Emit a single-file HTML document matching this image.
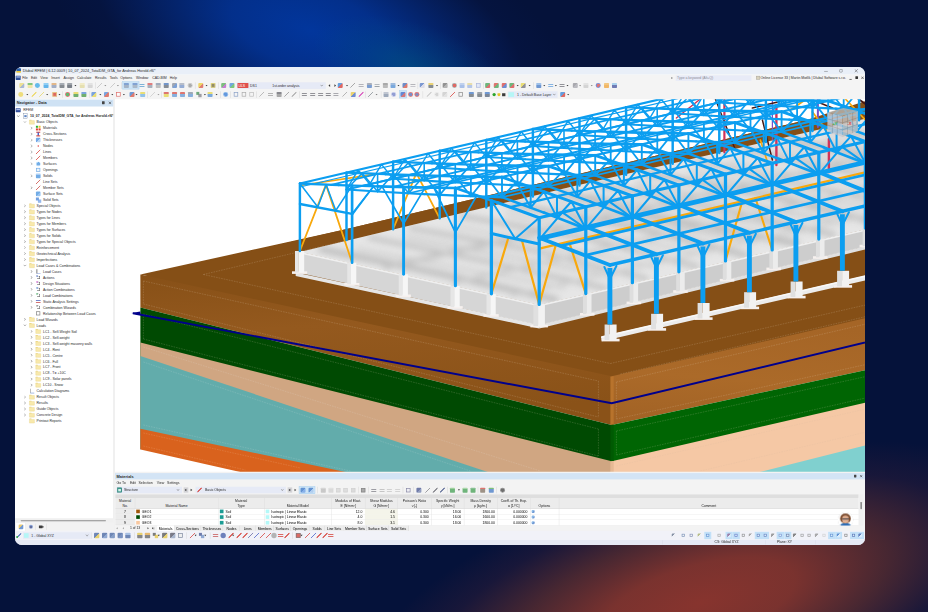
<!DOCTYPE html>
<html><head><meta charset="utf-8"><title>RFEM</title>
<style>
html,body{margin:0;padding:0;}
body{width:928px;height:612px;overflow:hidden;position:relative;background:#05123a;
 font-family:"Liberation Sans",sans-serif;}
#bg{position:absolute;left:0;top:0;width:928px;height:612px;overflow:hidden;background:#05123a;}
#g1{position:absolute;left:40px;top:-100px;width:540px;height:260px;transform:rotate(17deg);
 background:radial-gradient(ellipse closest-side, rgba(2,54,156,1) 0%, rgba(3,50,146,0.92) 30%, rgba(4,40,120,0.6) 60%, rgba(5,25,80,0.25) 82%, rgba(5,18,58,0) 100%);}
#g1b{position:absolute;left:310px;top:22px;width:200px;height:90px;transform:rotate(17deg);
 background:radial-gradient(ellipse closest-side, rgba(0,90,130,0.55) 0%, rgba(0,80,130,0.3) 50%, rgba(5,18,58,0) 100%);}
#g2{position:absolute;left:350px;top:468px;width:700px;height:270px;transform:rotate(-16deg);
 background:radial-gradient(ellipse closest-side, rgba(135,52,46,1) 0%, rgba(128,52,46,0.95) 28%, rgba(100,48,46,0.7) 55%, rgba(60,32,56,0.35) 80%, rgba(5,18,58,0) 100%);}
#win{position:absolute;left:15px;top:67px;width:850px;height:478px;border-radius:7px;overflow:hidden;background:#fff;}
#ui{position:absolute;left:0;top:0;width:2560px;height:1440px;transform:scale(0.332031);transform-origin:0 0;font-size:12px;color:#000;}
#scene{position:absolute;left:0;top:0;}


#ui div,#ui span{box-sizing:border-box;}
.abs{position:absolute;}
.t{position:absolute;white-space:nowrap;line-height:16px;height:16px;font-size:10.6px;letter-spacing:-0.1px;color:#2c2c2c;}
.b{font-weight:bold;font-size:11.8px;letter-spacing:0;}
.ic{position:absolute;width:16px;height:16px;opacity:0.72;}
.sep{position:absolute;width:1px;height:20px;background:#c9c9c9;}
.dd{position:absolute;width:0;height:0;border-left:3px solid transparent;border-right:3px solid transparent;border-top:4px solid #333;}
.hl{position:absolute;background:#cce4f7;border:1px solid #9ac6ea;}
.chev{position:absolute;width:6px;height:6px;border-right:1.3px solid #666;border-bottom:1.3px solid #666;}
.combo{position:absolute;background:#e6eaf6;height:20px;}
.th{position:absolute;text-align:center;white-space:nowrap;line-height:16px;font-size:10.4px;letter-spacing:-0.1px;color:#222;}
.td{position:absolute;white-space:nowrap;line-height:16px;height:16px;font-size:10.4px;letter-spacing:-0.1px;}
.tab{position:absolute;height:18px;line-height:17px;font-size:10.4px;letter-spacing:-0.1px;text-align:center;border-right:1px solid #c8c8c8;white-space:nowrap;}

</style></head><body><div id="bg"><div id="g1"></div><div id="g1b"></div><div id="g2"></div></div><div id="win">
<svg id="scene" style="position:absolute;left:98.60px;top:32.00px" width="751.40" height="372.75" viewBox="113.60 99.00 751.40 372.75">
<rect x="100" y="90" width="800" height="400" fill="#ffffff"/>
<polygon points="140.0,274.5 611.3,376.3 900.0,310.2 900.0,90.0 900.0,97.7 806.0,120.0 574.0,175.0 342.0,230.0" fill="#854f16" />
<defs><linearGradient id="gbl" x1="0" y1="0" x2="0.2" y2="1"><stop offset="0" stop-color="#875017"/><stop offset="0.4" stop-color="#94591e"/><stop offset="1" stop-color="#8a5218"/></linearGradient><linearGradient id="gbr" x1="0" y1="0" x2="-0.2" y2="1"><stop offset="0" stop-color="#a56526"/><stop offset="0.5" stop-color="#ab6a29"/><stop offset="1" stop-color="#a06124"/></linearGradient></defs>
<polygon points="140.0,277.0 611.3,378.8 900.0,312.7 900.0,90.0 806.0,120.0 574.0,175.0 342.0,230.0" fill="#854f16" />
<polygon points="140.0,274.5 611.3,376.3 611.3,425.0 140.0,307.5" fill="url(#gbl)" />
<polygon points="140.0,307.5 611.3,425.0 611.3,600.0 140.0,600.0" fill="#004a02" />
<polygon points="140.0,342.5 611.3,461.3 611.3,600.0 140.0,600.0" fill="#d0a682" />
<polygon points="140.0,356.0 611.3,513.4 611.3,600.0 140.0,600.0" fill="#62acab" />
<polygon points="140.0,428.8 611.3,528.0 611.3,600.0 140.0,600.0" fill="#d9621d" />
<polygon points="139.0,449.2 611.3,556.0 611.3,600.0 139.0,600.0" fill="#ffffff" />
<polygon points="611.3,376.3 900.0,310.2 900.0,362.5 611.3,425.0" fill="url(#gbr)" />
<polygon points="611.3,425.0 900.0,362.5 900.0,600.0 611.3,600.0" fill="#006503" />
<polygon points="611.3,461.3 900.0,394.6 900.0,600.0 611.3,600.0" fill="#f5c8a5" />
<polygon points="611.3,509.2 900.0,436.7 900.0,600.0 611.3,600.0" fill="#80d0cf" />
<polygon points="610.0,376.5 613.3,376.2 613.3,425.0 610.0,425.0" fill="#b8732c" />
<polygon points="610.0,425.0 613.3,424.5 613.3,461.0 610.0,461.3" fill="#005a03" />
<polygon points="610.0,461.3 613.3,461.0 613.3,480.0 610.0,480.0" fill="#e6b994" />
<path d="M203.0 274.5L610.0 363.5" stroke="#e8d8c0" stroke-opacity="0.36" stroke-width="0.5" stroke-dasharray="1.6 1" fill="none"/>
<path d="M610.0 363.5L900.0 297.0" stroke="#e8d8c0" stroke-opacity="0.36" stroke-width="0.5" stroke-dasharray="1.6 1" fill="none"/>
<path d="M203.0 274.5L342.0 241.5" stroke="#e8d8c0" stroke-opacity="0.36" stroke-width="0.5" stroke-dasharray="1.6 1" fill="none"/>
<path d="M143.0 281.0L598.0 381.0" stroke="#e8d8c0" stroke-opacity="0.36" stroke-width="0.5" stroke-dasharray="1.6 1" fill="none"/>
<path d="M143.0 304.0L598.0 417.0" stroke="#e8d8c0" stroke-opacity="0.36" stroke-width="0.5" stroke-dasharray="1.6 1" fill="none"/>
<path d="M143.0 281.0L143.0 304.0" stroke="#e8d8c0" stroke-opacity="0.36" stroke-width="0.5" stroke-dasharray="1.6 1" fill="none"/>
<path d="M598.0 381.0L598.0 417.0" stroke="#e8d8c0" stroke-opacity="0.36" stroke-width="0.5" stroke-dasharray="1.6 1" fill="none"/>
<path d="M143.0 314.0L598.0 429.0" stroke="#e8d8c0" stroke-opacity="0.36" stroke-width="0.5" stroke-dasharray="1.6 1" fill="none"/>
<path d="M143.0 339.0L598.0 456.0" stroke="#e8d8c0" stroke-opacity="0.36" stroke-width="0.5" stroke-dasharray="1.6 1" fill="none"/>
<path d="M143.0 314.0L143.0 339.0" stroke="#e8d8c0" stroke-opacity="0.36" stroke-width="0.5" stroke-dasharray="1.6 1" fill="none"/>
<path d="M598.0 429.0L598.0 456.0" stroke="#e8d8c0" stroke-opacity="0.36" stroke-width="0.5" stroke-dasharray="1.6 1" fill="none"/>
<path d="M143.0 347.0L540.0 471.0" stroke="#eeeeee" stroke-opacity="0.30" stroke-width="0.5" stroke-dasharray="1.6 1" fill="none"/>
<path d="M143.0 362.0L470.0 471.0" stroke="#eeeeee" stroke-opacity="0.30" stroke-width="0.5" stroke-dasharray="1.6 1" fill="none"/>
<path d="M143.0 425.0L350.0 471.0" stroke="#eeeeee" stroke-opacity="0.30" stroke-width="0.5" stroke-dasharray="1.6 1" fill="none"/>
<path d="M143.0 433.0L300.0 468.0" stroke="#ffe0c0" stroke-opacity="0.30" stroke-width="0.5" stroke-dasharray="1.6 1" fill="none"/>
<path d="M143.0 446.0L245.0 470.0" stroke="#ffe0c0" stroke-opacity="0.30" stroke-width="0.5" stroke-dasharray="1.6 1" fill="none"/>
<path d="M616.0 382.0L900.0 316.0" stroke="#e8d8c0" stroke-opacity="0.36" stroke-width="0.5" stroke-dasharray="1.6 1" fill="none"/>
<path d="M616.0 419.0L900.0 357.0" stroke="#e8d8c0" stroke-opacity="0.36" stroke-width="0.5" stroke-dasharray="1.6 1" fill="none"/>
<path d="M616.0 382.0L616.0 419.0" stroke="#e8d8c0" stroke-opacity="0.36" stroke-width="0.5" stroke-dasharray="1.6 1" fill="none"/>
<path d="M616.0 431.0L900.0 369.0" stroke="#e8d8c0" stroke-opacity="0.36" stroke-width="0.5" stroke-dasharray="1.6 1" fill="none"/>
<path d="M616.0 455.0L900.0 390.0" stroke="#e8d8c0" stroke-opacity="0.36" stroke-width="0.5" stroke-dasharray="1.6 1" fill="none"/>
<path d="M616.0 431.0L616.0 455.0" stroke="#e8d8c0" stroke-opacity="0.36" stroke-width="0.5" stroke-dasharray="1.6 1" fill="none"/>
<path d="M616.0 466.0L900.0 401.0" stroke="#d8b8a0" stroke-opacity="0.40" stroke-width="0.5" stroke-dasharray="1.6 1" fill="none"/>
<path d="M700.0 471.0L900.0 424.0" stroke="#d8b8a0" stroke-opacity="0.40" stroke-width="0.5" stroke-dasharray="1.6 1" fill="none"/>
<path d="M620.0 374.0L900.0 308.5" stroke="#e8d8c0" stroke-opacity="0.36" stroke-width="0.5" stroke-dasharray="1.6 1" fill="none"/>
<path d="M132.5 313.2L611.3 403.3L900 334" stroke="#00008c" stroke-width="1.9" fill="none"/>
<polygon points="131,313 140,311.6 140,315.2" fill="#00008c"/>
<defs><filter id="blur3" x="-10%" y="-10%" width="120%" height="120%"><feGaussianBlur stdDeviation="3"/></filter><clipPath id="slabclip"><polygon points="299.3,252.0 538.8,305.0 900.0,221.4 900.0,110.5 806.0,132.5 574.0,186.0"/></clipPath></defs>
<polygon points="299.3,252.0 538.8,305.0 900.0,221.4 900.0,110.5 806.0,132.5 574.0,186.0" fill="#e6e6e6" />
<g clip-path="url(#slabclip)"><g filter="url(#blur3)" opacity="0.8"><path d="M318.6 248.7L437.5 273.4L557.7 300.1" stroke="#b2b2b2" stroke-width="6.0" fill="none"/><path d="M355.8 248.8L564.1 287.6" stroke="#c2c2c2" stroke-width="2.6" fill="none"/><path d="M367.6 237.3L487.1 261.8L606.7 288.6" stroke="#b2b2b2" stroke-width="4.2" fill="none"/><path d="M405.4 237.2L613.1 276.2" stroke="#c2c2c2" stroke-width="3.5" fill="none"/><path d="M408.6 227.7L534.7 250.7L647.7 279.0" stroke="#b2b2b2" stroke-width="4.2" fill="none"/><path d="M453.0 226.0L654.1 266.6" stroke="#c2c2c2" stroke-width="2.7" fill="none"/><path d="M459.6 215.8L586.8 238.5L698.7 267.1" stroke="#b2b2b2" stroke-width="4.4" fill="none"/><path d="M505.1 213.9L705.0 254.7" stroke="#c2c2c2" stroke-width="2.9" fill="none"/><path d="M508.4 204.3L635.1 227.2L747.5 255.7" stroke="#b2b2b2" stroke-width="5.7" fill="none"/><path d="M553.4 202.6L753.9 243.2" stroke="#c2c2c2" stroke-width="3.3" fill="none"/><path d="M558.9 192.5L669.1 219.3L798.0 243.8" stroke="#b2b2b2" stroke-width="6.6" fill="none"/><path d="M587.4 194.6L804.4 231.4" stroke="#c2c2c2" stroke-width="3.1" fill="none"/><path d="M596.2 183.8L716.7 208.1L835.3 235.1" stroke="#b2b2b2" stroke-width="4.9" fill="none"/><path d="M635.0 183.5L841.7 222.7" stroke="#c2c2c2" stroke-width="4.1" fill="none"/><path d="M643.2 172.8L769.8 195.7L882.3 224.1" stroke="#b2b2b2" stroke-width="5.9" fill="none"/><path d="M688.0 171.1L888.7 211.7" stroke="#c2c2c2" stroke-width="3.2" fill="none"/><path d="M693.9 160.9L809.1 186.5L933.1 212.3" stroke="#b2b2b2" stroke-width="4.2" fill="none"/><path d="M727.4 161.9L939.4 199.8" stroke="#c2c2c2" stroke-width="2.9" fill="none"/><path d="M742.0 149.7L860.8 174.4L981.1 201.0" stroke="#b2b2b2" stroke-width="4.9" fill="none"/><path d="M779.1 149.8L987.5 188.6" stroke="#c2c2c2" stroke-width="3.7" fill="none"/><path d="M786.1 139.4L905.6 164.0L1025.2 190.7" stroke="#b2b2b2" stroke-width="6.4" fill="none"/><path d="M823.9 139.3L1031.6 178.3" stroke="#c2c2c2" stroke-width="3.9" fill="none"/><path d="M830.3 129.0L956.1 152.2L1069.5 180.4" stroke="#b2b2b2" stroke-width="5.6" fill="none"/><path d="M874.3 127.5L1075.8 167.9" stroke="#c2c2c2" stroke-width="4.3" fill="none"/><path d="M882.4 116.9L998.7 142.2L1121.5 168.2" stroke="#b2b2b2" stroke-width="6.9" fill="none"/><path d="M916.9 117.5L1127.9 155.8" stroke="#c2c2c2" stroke-width="2.7" fill="none"/><path d="M383.1 267.6L993.8 129.1" stroke="#bcbcbc" stroke-width="5" fill="none"/><path d="M452.5 283.1L1063.2 144.6" stroke="#c4c4c4" stroke-width="4" fill="none"/><path d="M509.9 295.9L1120.6 157.4" stroke="#c8c8c8" stroke-width="3" fill="none"/></g></g>
<polygon points="299.3,252.0 538.8,305.0 538.8,325.3 299.3,273.0" fill="#d6d6d6" />
<polygon points="538.8,305.0 900.0,221.4 900.0,238.2 538.8,325.3" fill="#cdcdcd" />
<polygon points="295.3,272.5 538.8,324.8 538.8,328.6 295.3,276.0" fill="#e6e6e6" />
<polygon points="538.8,324.8 900.0,237.7 900.0,241.0 538.8,328.6" fill="#e0e0e0" />
<path d="M299.3 252.6L538.8 305.6L900.0 222.0" stroke="#efefef" stroke-width="1.8" fill="none"/>
<rect x="291.6" y="271.3" width="15.2" height="2.6" fill="#f6f0ee"/><rect x="294.6" y="251.0" width="3.9" height="21.5" fill="#e6e6e6"/><rect x="298.5" y="251.0" width="5.3" height="21.5" fill="#f6f6f6"/>
<rect x="343.8" y="283.0" width="15.2" height="2.6" fill="#f6f0ee"/><rect x="346.8" y="262.7" width="3.9" height="21.5" fill="#e6e6e6"/><rect x="350.6" y="262.7" width="5.3" height="21.5" fill="#f6f6f6"/>
<rect x="395.3" y="294.5" width="15.2" height="2.6" fill="#f6f0ee"/><rect x="398.3" y="274.2" width="3.9" height="21.5" fill="#e6e6e6"/><rect x="402.2" y="274.2" width="5.3" height="21.5" fill="#f6f6f6"/>
<rect x="447.1" y="306.1" width="15.2" height="2.6" fill="#f6f0ee"/><rect x="450.1" y="285.8" width="3.9" height="21.5" fill="#e6e6e6"/><rect x="454.0" y="285.8" width="5.3" height="21.5" fill="#f6f6f6"/>
<rect x="483.1" y="314.1" width="15.2" height="2.6" fill="#f6f0ee"/><rect x="486.1" y="293.8" width="3.9" height="21.5" fill="#e6e6e6"/><rect x="490.0" y="293.8" width="5.3" height="21.5" fill="#f6f6f6"/>
<rect x="530.0" y="324.8" width="17.5" height="2.6" fill="#f6f0ee"/><rect x="533.0" y="304.5" width="4.8" height="21.5" fill="#e0e0e0"/><rect x="537.8" y="304.5" width="6.7" height="21.5" fill="#f2f2f2"/>
<rect x="579.6" y="313.0" width="14.5" height="2.6" fill="#f6f0ee"/><rect x="582.6" y="293.6" width="3.6" height="20.6" fill="#dedede"/><rect x="586.2" y="293.6" width="4.9" height="20.6" fill="#ececec"/>
<rect x="626.2" y="301.6" width="14.5" height="2.6" fill="#f6f0ee"/><rect x="629.2" y="282.7" width="3.6" height="20.1" fill="#dedede"/><rect x="632.8" y="282.7" width="4.9" height="20.1" fill="#ececec"/>
<rect x="672.8" y="290.2" width="14.5" height="2.6" fill="#f6f0ee"/><rect x="675.8" y="271.8" width="3.6" height="19.6" fill="#dedede"/><rect x="679.4" y="271.8" width="4.9" height="19.6" fill="#ececec"/>
<rect x="719.4" y="278.9" width="14.5" height="2.6" fill="#f6f0ee"/><rect x="722.4" y="260.9" width="3.6" height="19.2" fill="#dedede"/><rect x="726.0" y="260.9" width="4.9" height="19.2" fill="#ececec"/>
<rect x="766.0" y="267.6" width="14.5" height="2.6" fill="#f6f0ee"/><rect x="769.0" y="250.0" width="3.6" height="18.8" fill="#dedede"/><rect x="772.6" y="250.0" width="4.9" height="18.8" fill="#ececec"/>
<rect x="812.6" y="256.2" width="14.5" height="2.6" fill="#f6f0ee"/><rect x="815.6" y="239.1" width="3.6" height="18.3" fill="#dedede"/><rect x="819.2" y="239.1" width="4.9" height="18.3" fill="#ececec"/>
<rect x="859.2" y="244.8" width="14.5" height="2.6" fill="#f6f0ee"/><rect x="862.2" y="228.2" width="3.6" height="17.9" fill="#dedede"/><rect x="865.8" y="228.2" width="4.9" height="17.9" fill="#ececec"/>
<path d="M601.0 339.0L900.0 269.9" stroke="#ececec" stroke-width="4.6" fill="none"/>
<path d="M601.0 337.1L900.0 268.0" stroke="#f8f8f8" stroke-width="1.6" fill="none"/>
<rect x="601.2" y="338.8" width="18.0" height="2.6" fill="#f6f0ee"/><rect x="604.2" y="324.5" width="5.0" height="15.5" fill="#e0e0e0"/><rect x="609.2" y="324.5" width="7.0" height="15.5" fill="#f2f2f2"/>
<rect x="647.7" y="328.1" width="18.0" height="2.6" fill="#f6f0ee"/><rect x="650.7" y="313.8" width="5.0" height="15.5" fill="#e0e0e0"/><rect x="655.7" y="313.8" width="7.0" height="15.5" fill="#f2f2f2"/>
<rect x="694.2" y="317.3" width="18.0" height="2.6" fill="#f6f0ee"/><rect x="697.2" y="303.0" width="5.0" height="15.5" fill="#e0e0e0"/><rect x="702.2" y="303.0" width="7.0" height="15.5" fill="#f2f2f2"/>
<rect x="740.7" y="306.6" width="18.0" height="2.6" fill="#f6f0ee"/><rect x="743.7" y="292.2" width="5.0" height="15.5" fill="#e0e0e0"/><rect x="748.7" y="292.2" width="7.0" height="15.5" fill="#f2f2f2"/>
<rect x="787.2" y="295.8" width="18.0" height="2.6" fill="#f6f0ee"/><rect x="790.2" y="281.5" width="5.0" height="15.5" fill="#e0e0e0"/><rect x="795.2" y="281.5" width="7.0" height="15.5" fill="#f2f2f2"/>
<rect x="833.7" y="285.1" width="18.0" height="2.6" fill="#f6f0ee"/><rect x="836.7" y="270.8" width="5.0" height="15.5" fill="#e0e0e0"/><rect x="841.7" y="270.8" width="7.0" height="15.5" fill="#f2f2f2"/>
<rect x="880.2" y="274.3" width="18.0" height="2.6" fill="#f6f0ee"/><rect x="883.2" y="260.0" width="5.0" height="15.5" fill="#e0e0e0"/><rect x="888.2" y="260.0" width="7.0" height="15.5" fill="#f2f2f2"/>
<path d="M724.0 100.0L724.0 152.5" stroke="#d0345a" stroke-width="2.20" fill="none" stroke-linecap="round"/>
<path d="M776.0 105.0L776.0 165.0M828.5 139.0L828.5 172.0" stroke="#d0345a" stroke-width="2.40" fill="none" stroke-linecap="round"/>
<path d="M772.0 99.0L772.0 140.0" stroke="#7a4cc8" stroke-width="1.20" fill="none" stroke-linecap="round"/>
<path d="M817.5 99.0L817.5 127.0" stroke="#7a4cc8" stroke-width="2.00" fill="none" stroke-linecap="round"/>
<path d="M700.0 99.0L676.0 118.0" stroke="#d0345a" stroke-width="1.40" fill="none" stroke-linecap="round"/>
<path d="M715.0 99.0L735.0 150.0" stroke="#4a1a14" stroke-width="1.40" fill="none" stroke-linecap="round"/>
<path d="M752.0 108.0L790.0 99.0M810.0 99.0L832.0 108.0" stroke="#4a1a14" stroke-width="1.60" fill="none" stroke-linecap="round"/>
<path d="M762.0 120.0L772.0 160.0" stroke="#4a1a14" stroke-width="1.50" fill="none" stroke-linecap="round"/>
<path d="M858.0 99.0L865.0 104.0" stroke="#4a1a14" stroke-width="1.80" fill="none" stroke-linecap="round"/>
<path d="M790.0 110.0L806.0 99.0M812.0 112.0L826.0 130.0M845.0 99.0L865.0 120.0" stroke="#f8a80c" stroke-width="1.80" fill="none" stroke-linecap="round"/>
<path d="M760.0 140.0L768.0 165.0" stroke="#f8a80c" stroke-width="1.70" fill="none" stroke-linecap="round"/>
<path d="M392.7 229.2L416.0 173.2M416.0 173.2L439.3 218.3M299.5 251.0L325.6 184.6M325.6 184.6L351.7 262.7" stroke="#f8a80c" stroke-width="1.80" fill="none" stroke-linecap="round"/>
<path d="M299.5 185.5L377.2 173.9" stroke="#f8a80c" stroke-width="1.60" fill="none" stroke-linecap="round"/>
<path d="M538.8 248.6L1144.6 106.9M491.0 293.8L508.1 237.3M521.5 240.3L538.8 304.5M538.8 304.5L555.5 244.7M568.6 241.6L585.4 293.6" stroke="#f8a80c" stroke-width="2.20" fill="none" stroke-linecap="round"/>
<path d="M725.1 260.9L741.9 201.1M755.0 198.0L771.8 250.0" stroke="#f8a80c" stroke-width="2.10" fill="none" stroke-linecap="round"/>
<path d="M299.5 251.0L299.5 183.5M346.1 240.1L346.1 172.6M392.7 229.2L392.7 161.7M439.3 218.3L439.3 150.8M485.9 207.4L485.9 139.9M532.5 196.5L532.5 129.0M579.1 185.6L579.1 118.1M625.7 174.7L625.7 107.2M672.3 163.8L672.3 96.3M718.9 152.9L718.9 85.4M765.5 142.0L765.5 74.5M812.1 131.1L812.1 63.6M858.7 120.2L858.7 52.7M905.3 109.3L905.3 41.8" stroke="#0c9ef0" stroke-width="2.45" fill="none" stroke-linecap="round"/>
<path d="M299.5 183.5L905.3 41.8" stroke="#0c9ef0" stroke-width="2.20" fill="none" stroke-linecap="round"/>
<path d="M299.5 187.0L905.3 45.3" stroke="#0c9ef0" stroke-width="1.20" fill="none" stroke-linecap="round"/>
<path d="M346.1 189.6L905.3 58.8" stroke="#0c9ef0" stroke-width="1.90" fill="none" stroke-linecap="round"/>
<path d="M346.1 189.6L357.8 169.9M357.8 169.9L369.4 184.2M369.4 184.2L381.1 164.4M381.1 164.4L392.7 178.7M392.7 178.7L404.4 159.0M404.4 159.0L416.0 173.2M416.0 173.2L427.6 153.5M427.6 153.5L439.3 167.8M439.3 167.8L451.0 148.1M451.0 148.1L462.6 162.3M462.6 162.3L474.2 142.6M474.2 142.6L485.9 156.9M485.9 156.9L497.6 137.2M497.6 137.2L509.2 151.4M509.2 151.4L520.9 131.7M520.9 131.7L532.5 146.0M532.5 146.0L544.1 126.3M544.1 126.3L555.8 140.6M555.8 140.6L567.5 120.8M567.5 120.8L579.1 135.1M579.1 135.1L590.8 115.4M590.8 115.4L602.4 129.6M602.4 129.6L614.0 109.9M614.0 109.9L625.7 124.2M625.7 124.2L637.4 104.5M637.4 104.5L649.0 118.8M649.0 118.8L660.7 99.0M660.7 99.0L672.3 113.3M672.3 113.3L684.0 93.6M684.0 93.6L695.6 107.8M695.6 107.8L707.2 88.1M707.2 88.1L718.9 102.4M718.9 102.4L730.5 82.7M730.5 82.7L742.2 96.9M742.2 96.9L753.9 77.2M753.9 77.2L765.5 91.5M765.5 91.5L777.2 71.8M777.2 71.8L788.8 86.1M788.8 86.1L800.5 66.3M800.5 66.3L812.1 80.6M812.1 80.6L823.8 60.9M823.8 60.9L835.4 75.1M835.4 75.1L847.1 55.4M847.1 55.4L858.7 69.7M858.7 69.7L870.4 50.0M870.4 50.0L882.0 64.2M882.0 64.2L893.6 44.5M893.6 44.5L905.3 58.8" stroke="#0c9ef0" stroke-width="1.45" fill="none" stroke-linecap="round"/>
<path d="M905.3 41.8L944.2 43.4M858.7 52.7L897.6 54.3M812.1 63.6L851.0 65.2M765.5 74.5L804.4 76.1M718.9 85.4L757.8 87.0M672.3 96.3L711.2 97.9M625.7 107.2L664.6 108.8M579.1 118.1L618.0 119.7M532.5 129.0L571.4 130.6M485.9 139.9L524.8 141.5M439.3 150.8L478.2 152.4M392.7 161.7L431.6 163.3M346.1 172.6L385.0 174.2M299.5 183.5L338.4 185.1" stroke="#0c9ef0" stroke-width="2.28" fill="none" stroke-linecap="round"/>
<path d="M944.2 43.4L983.1 44.7M897.6 54.3L936.5 55.6M851.0 65.2L889.9 66.5M804.4 76.1L843.3 77.4M757.8 87.0L796.7 88.3M711.2 97.9L750.1 99.2M664.6 108.8L703.5 110.1M618.0 119.7L656.9 121.0M571.4 130.6L610.3 131.9M524.8 141.5L563.7 142.8M478.2 152.4L517.1 153.7M431.6 163.3L470.5 164.6M385.0 174.2L423.9 175.5M338.4 185.1L377.3 186.4" stroke="#0c9ef0" stroke-width="2.43" fill="none" stroke-linecap="round"/>
<path d="M983.1 44.7L1021.9 45.7M936.5 55.6L975.3 56.6M889.9 66.5L928.7 67.5M843.3 77.4L882.1 78.4M796.7 88.3L835.5 89.3M750.1 99.2L788.9 100.2M703.5 110.1L742.3 111.1M656.9 121.0L695.7 122.0M610.3 131.9L649.1 132.9M563.7 142.8L602.5 143.8M517.1 153.7L555.9 154.7M470.5 164.6L509.3 165.6M423.9 175.5L462.7 176.5M377.3 186.4L416.1 187.4" stroke="#0c9ef0" stroke-width="2.58" fill="none" stroke-linecap="round"/>
<path d="M1021.9 45.7L1060.8 46.3M975.3 56.6L1014.2 57.2M928.7 67.5L967.6 68.1M882.1 78.4L921.0 79.0M835.5 89.3L874.4 89.9M788.9 100.2L827.8 100.8M742.3 111.1L781.2 111.7M695.7 122.0L734.6 122.6M649.1 132.9L688.0 133.5M602.5 143.8L641.4 144.4M555.9 154.7L594.8 155.3M509.3 165.6L548.2 166.2M462.7 176.5L501.6 177.1M416.1 187.4L455.0 188.0" stroke="#0c9ef0" stroke-width="2.73" fill="none" stroke-linecap="round"/>
<path d="M1060.8 46.3L1102.7 60.8M1014.2 57.2L1056.1 71.7M967.6 68.1L1009.5 82.6M921.0 79.0L962.9 93.5M874.4 89.9L916.3 104.4M827.8 100.8L869.7 115.3M781.2 111.7L823.1 126.2M734.6 122.6L776.5 137.1M688.0 133.5L729.9 148.0M641.4 144.4L683.3 158.9M594.8 155.3L636.7 169.8M548.2 166.2L590.1 180.7M501.6 177.1L543.5 191.6M455.0 188.0L496.9 202.5" stroke="#0c9ef0" stroke-width="2.88" fill="none" stroke-linecap="round"/>
<path d="M1102.7 60.8L1144.6 76.1M1056.1 71.7L1098.0 87.0M1009.5 82.6L1051.3 97.9M962.9 93.5L1004.8 108.8M916.3 104.4L958.2 119.7M869.7 115.3L911.5 130.6M823.1 126.2L865.0 141.5M776.5 137.1L818.4 152.4M729.9 148.0L771.8 163.3M683.3 158.9L725.1 174.2M636.7 169.8L678.5 185.1M590.1 180.7L632.0 196.0M543.5 191.6L585.4 206.9M496.9 202.5L538.8 217.8" stroke="#0c9ef0" stroke-width="3.04" fill="none" stroke-linecap="round"/>
<path d="M905.3 58.8L944.2 61.2M858.7 69.7L897.6 72.1M812.1 80.6L851.0 83.0M765.5 91.5L804.4 93.9M718.9 102.4L757.8 104.8M672.3 113.3L711.2 115.7M625.7 124.2L664.6 126.6M579.1 135.1L618.0 137.5M532.5 146.0L571.4 148.4M485.9 156.9L524.8 159.3M439.3 167.8L478.2 170.2M392.7 178.7L431.6 181.1M346.1 189.6L385.0 192.0M491.0 200.4L514.8 238.8M514.8 238.8L538.8 217.8" stroke="#0c9ef0" stroke-width="1.96" fill="none" stroke-linecap="round"/>
<path d="M944.2 61.2L983.1 63.3M897.6 72.1L936.5 74.2M851.0 83.0L889.9 85.1M804.4 93.9L843.3 96.0M757.8 104.8L796.7 106.9M711.2 115.7L750.1 117.8M664.6 126.6L703.5 128.7M618.0 137.5L656.9 139.6M571.4 148.4L610.3 150.5M524.8 159.3L563.7 161.4M478.2 170.2L517.1 172.3M431.6 181.1L470.5 183.2M385.0 192.0L423.9 194.1" stroke="#0c9ef0" stroke-width="2.09" fill="none" stroke-linecap="round"/>
<path d="M983.1 63.3L1021.9 65.1M936.5 74.2L975.3 76.0M889.9 85.1L928.7 86.9M843.3 96.0L882.1 97.8M796.7 106.9L835.5 108.7M750.1 117.8L788.9 119.6M703.5 128.7L742.3 130.5M656.9 139.6L695.7 141.4M610.3 150.5L649.1 152.3M563.7 161.4L602.5 163.2M517.1 172.3L555.9 174.1M470.5 183.2L509.3 185.0M423.9 194.1L462.7 195.9" stroke="#0c9ef0" stroke-width="2.22" fill="none" stroke-linecap="round"/>
<path d="M1021.9 65.1L1060.8 66.4M975.3 76.0L1014.2 77.3M928.7 86.9L967.6 88.2M882.1 97.8L921.0 99.1M835.5 108.7L874.4 110.0M788.9 119.6L827.8 120.9M742.3 130.5L781.2 131.8M695.7 141.4L734.6 142.7M649.1 152.3L688.0 153.6M602.5 163.2L641.4 164.5M555.9 174.1L594.8 175.4M509.3 185.0L548.2 186.3M462.7 195.9L501.6 197.2" stroke="#0c9ef0" stroke-width="2.35" fill="none" stroke-linecap="round"/>
<path d="M1060.8 66.4L1102.7 81.8M1014.2 77.3L1056.1 92.7M967.6 88.2L1009.5 103.6M921.0 99.1L962.9 114.5M874.4 110.0L916.3 125.4M827.8 120.9L869.7 136.3M781.2 131.8L823.1 147.2M734.6 142.7L776.5 158.1M688.0 153.6L729.9 169.0M641.4 164.5L683.3 179.9M594.8 175.4L636.7 190.8M548.2 186.3L590.1 201.7M501.6 197.2L543.5 212.6" stroke="#0c9ef0" stroke-width="2.49" fill="none" stroke-linecap="round"/>
<path d="M1102.7 81.8L1144.6 97.9M1056.1 92.7L1098.0 108.8M1009.5 103.6L1051.3 119.7M962.9 114.5L1004.8 130.6M916.3 125.4L958.2 141.5M869.7 136.3L911.5 152.4M823.1 147.2L865.0 163.3M776.5 158.1L818.4 174.2M729.9 169.0L771.8 185.1M683.3 179.9L725.1 196.0M636.7 190.8L678.5 206.9M590.1 201.7L632.0 217.8M543.5 212.6L585.4 228.7" stroke="#0c9ef0" stroke-width="2.63" fill="none" stroke-linecap="round"/>
<path d="M905.3 58.8L920.9 42.5M920.9 42.5L936.4 60.8M858.7 69.7L874.3 53.4M874.3 53.4L889.8 71.7M812.1 80.6L827.7 64.3M827.7 64.3L843.2 82.6M765.5 91.5L781.1 75.2M781.1 75.2L796.6 93.5M718.9 102.4L734.5 86.1M734.5 86.1L750.0 104.4M672.3 113.3L687.9 97.0M687.9 97.0L703.4 115.3M625.7 124.2L641.3 107.9M641.3 107.9L656.8 126.2M579.1 135.1L594.7 118.8M594.7 118.8L610.2 137.1M532.5 146.0L548.1 129.7M548.1 129.7L563.6 148.0M485.9 156.9L501.5 140.6M501.5 140.6L517.0 158.9M439.3 167.8L454.9 151.5M454.9 151.5L470.4 169.8M392.7 178.7L408.3 162.4M408.3 162.4L423.8 180.7M346.1 189.6L361.7 173.3M361.7 173.3L377.2 191.6" stroke="#0c9ef0" stroke-width="1.49" fill="none" stroke-linecap="round"/>
<path d="M936.4 60.8L952.0 43.7M952.0 43.7L967.5 62.5M936.4 60.8L936.4 43.1M889.8 71.7L905.4 54.6M905.4 54.6L920.9 73.4M889.8 71.7L889.8 54.0M843.2 82.6L858.8 65.5M858.8 65.5L874.3 84.3M843.2 82.6L843.2 64.9M796.6 93.5L812.2 76.4M812.2 76.4L827.7 95.2M796.6 93.5L796.6 75.8M750.0 104.4L765.6 87.3M765.6 87.3L781.1 106.1M750.0 104.4L750.0 86.7M703.4 115.3L719.0 98.2M719.0 98.2L734.5 117.0M703.4 115.3L703.4 97.6M656.8 126.2L672.4 109.1M672.4 109.1L687.9 127.9M656.8 126.2L656.8 108.5M610.2 137.1L625.8 120.0M625.8 120.0L641.3 138.8M610.2 137.1L610.2 119.4M563.6 148.0L579.2 130.9M579.2 130.9L594.7 149.7M563.6 148.0L563.6 130.3M517.0 158.9L532.6 141.8M532.6 141.8L548.1 160.6M517.0 158.9L517.0 141.2M470.4 169.8L486.0 152.7M486.0 152.7L501.5 171.5M470.4 169.8L470.4 152.1M423.8 180.7L439.4 163.6M439.4 163.6L454.9 182.4M423.8 180.7L423.8 163.0M377.2 191.6L392.8 174.5M392.8 174.5L408.3 193.3M377.2 191.6L377.2 173.9" stroke="#0c9ef0" stroke-width="1.57" fill="none" stroke-linecap="round"/>
<path d="M967.5 62.5L983.1 44.7M983.1 44.7L998.6 64.1M967.5 62.5L967.5 44.3M920.9 73.4L936.5 55.6M936.5 55.6L952.0 75.0M920.9 73.4L920.9 55.2M874.3 84.3L889.9 66.5M889.9 66.5L905.4 85.9M874.3 84.3L874.3 66.1M827.7 95.2L843.3 77.4M843.3 77.4L858.8 96.8M827.7 95.2L827.7 77.0M781.1 106.1L796.7 88.3M796.7 88.3L812.2 107.7M781.1 106.1L781.1 87.9M734.5 117.0L750.1 99.2M750.1 99.2L765.6 118.6M734.5 117.0L734.5 98.8M687.9 127.9L703.5 110.1M703.5 110.1L719.0 129.5M687.9 127.9L687.9 109.7M641.3 138.8L656.9 121.0M656.9 121.0L672.4 140.4M641.3 138.8L641.3 120.6M594.7 149.7L610.3 131.9M610.3 131.9L625.8 151.3M594.7 149.7L594.7 131.5M548.1 160.6L563.7 142.8M563.7 142.8L579.2 162.2M548.1 160.6L548.1 142.4M501.5 171.5L517.1 153.7M517.1 153.7L532.6 173.1M501.5 171.5L501.5 153.3M454.9 182.4L470.5 164.6M470.5 164.6L486.0 184.0M454.9 182.4L454.9 164.2M408.3 193.3L423.9 175.5M423.9 175.5L439.4 194.9M408.3 193.3L408.3 175.1" stroke="#0c9ef0" stroke-width="1.65" fill="none" stroke-linecap="round"/>
<path d="M998.6 64.1L1014.2 45.5M1014.2 45.5L1029.7 65.4M998.6 64.1L998.6 45.2M952.0 75.0L967.6 56.4M967.6 56.4L983.1 76.3M952.0 75.0L952.0 56.1M905.4 85.9L921.0 67.3M921.0 67.3L936.5 87.2M905.4 85.9L905.4 67.0M858.8 96.8L874.4 78.2M874.4 78.2L889.9 98.1M858.8 96.8L858.8 77.9M812.2 107.7L827.8 89.1M827.8 89.1L843.3 109.0M812.2 107.7L812.2 88.8M765.6 118.6L781.2 100.0M781.2 100.0L796.7 119.9M765.6 118.6L765.6 99.7M719.0 129.5L734.6 110.9M734.6 110.9L750.1 130.8M719.0 129.5L719.0 110.6M672.4 140.4L688.0 121.8M688.0 121.8L703.5 141.7M672.4 140.4L672.4 121.5M625.8 151.3L641.4 132.7M641.4 132.7L656.9 152.6M625.8 151.3L625.8 132.4M579.2 162.2L594.8 143.6M594.8 143.6L610.3 163.5M579.2 162.2L579.2 143.3M532.6 173.1L548.2 154.5M548.2 154.5L563.7 174.4M532.6 173.1L532.6 154.2M486.0 184.0L501.6 165.4M501.6 165.4L517.1 185.3M486.0 184.0L486.0 165.1M439.4 194.9L455.0 176.3M455.0 176.3L470.5 196.2M439.4 194.9L439.4 176.0" stroke="#0c9ef0" stroke-width="1.73" fill="none" stroke-linecap="round"/>
<path d="M1029.7 65.4L1045.3 46.1M1045.3 46.1L1060.8 66.4M1029.7 65.4L1029.7 45.8M983.1 76.3L998.7 57.0M998.7 57.0L1014.2 77.3M983.1 76.3L983.1 56.7M936.5 87.2L952.1 67.9M952.1 67.9L967.6 88.2M936.5 87.2L936.5 67.6M889.9 98.1L905.5 78.8M905.5 78.8L921.0 99.1M889.9 98.1L889.9 78.5M843.3 109.0L858.9 89.7M858.9 89.7L874.4 110.0M843.3 109.0L843.3 89.4M796.7 119.9L812.3 100.6M812.3 100.6L827.8 120.9M796.7 119.9L796.7 100.3M750.1 130.8L765.7 111.5M765.7 111.5L781.2 131.8M750.1 130.8L750.1 111.2M703.5 141.7L719.1 122.4M719.1 122.4L734.6 142.7M703.5 141.7L703.5 122.1M656.9 152.6L672.5 133.3M672.5 133.3L688.0 153.6M656.9 152.6L656.9 133.0M610.3 163.5L625.9 144.2M625.9 144.2L641.4 164.5M610.3 163.5L610.3 143.9M563.7 174.4L579.3 155.1M579.3 155.1L594.8 175.4M563.7 174.4L563.7 154.8M517.1 185.3L532.7 166.0M532.7 166.0L548.2 186.3M517.1 185.3L517.1 165.7M470.5 196.2L486.1 176.9M486.1 176.9L501.6 197.2M470.5 196.2L470.5 176.6" stroke="#0c9ef0" stroke-width="1.81" fill="none" stroke-linecap="round"/>
<path d="M1060.8 66.4L1075.2 51.2M1075.2 51.2L1089.5 76.9M1060.8 66.4L1060.8 46.3M1014.2 77.3L1028.6 62.1M1028.6 62.1L1042.9 87.8M1014.2 77.3L1014.2 57.2M967.6 88.2L982.0 73.0M982.0 73.0L996.3 98.7M967.6 88.2L967.6 68.1M921.0 99.1L935.4 83.9M935.4 83.9L949.7 109.6M921.0 99.1L921.0 79.0M874.4 110.0L888.8 94.8M888.8 94.8L903.1 120.5M874.4 110.0L874.4 89.9M827.8 120.9L842.2 105.7M842.2 105.7L856.5 131.4M827.8 120.9L827.8 100.8M781.2 131.8L795.6 116.6M795.6 116.6L809.9 142.3M781.2 131.8L781.2 111.7M734.6 142.7L749.0 127.5M749.0 127.5L763.3 153.2M734.6 142.7L734.6 122.6M688.0 153.6L702.4 138.4M702.4 138.4L716.7 164.1M688.0 153.6L688.0 133.5M641.4 164.5L655.8 149.3M655.8 149.3L670.1 175.0M641.4 164.5L641.4 144.4M594.8 175.4L609.2 160.2M609.2 160.2L623.5 185.9M594.8 175.4L594.8 155.3M548.2 186.3L562.6 171.1M562.6 171.1L576.9 196.8M548.2 186.3L548.2 166.2M501.6 197.2L516.0 182.0M516.0 182.0L530.3 207.7M501.6 197.2L501.6 177.1" stroke="#0c9ef0" stroke-width="1.88" fill="none" stroke-linecap="round"/>
<path d="M1089.5 76.9L1102.7 60.8M1102.7 60.8L1115.8 86.8M1089.5 76.9L1089.5 56.2M1042.9 87.8L1056.1 71.7M1056.1 71.7L1069.2 97.7M1042.9 87.8L1042.9 67.1M996.3 98.7L1009.5 82.6M1009.5 82.6L1022.6 108.6M996.3 98.7L996.3 78.0M949.7 109.6L962.9 93.5M962.9 93.5L976.0 119.5M949.7 109.6L949.7 88.9M903.1 120.5L916.3 104.4M916.3 104.4L929.4 130.4M903.1 120.5L903.1 99.8M856.5 131.4L869.7 115.3M869.7 115.3L882.8 141.3M856.5 131.4L856.5 110.7M809.9 142.3L823.1 126.2M823.1 126.2L836.2 152.2M809.9 142.3L809.9 121.6M763.3 153.2L776.5 137.1M776.5 137.1L789.6 163.1M763.3 153.2L763.3 132.5M716.7 164.1L729.9 148.0M729.9 148.0L743.0 174.0M716.7 164.1L716.7 143.4M670.1 175.0L683.3 158.9M683.3 158.9L696.4 184.9M670.1 175.0L670.1 154.3M623.5 185.9L636.7 169.8M636.7 169.8L649.8 195.8M623.5 185.9L623.5 165.2M576.9 196.8L590.1 180.7M590.1 180.7L603.2 206.7M576.9 196.8L576.9 176.1M530.3 207.7L543.5 191.6M543.5 191.6L556.6 217.6M530.3 207.7L530.3 187.0" stroke="#0c9ef0" stroke-width="1.95" fill="none" stroke-linecap="round"/>
<path d="M1115.8 86.8L1130.2 70.7M1130.2 70.7L1144.6 97.9M1115.8 86.8L1115.8 65.5M1069.2 97.7L1083.6 81.6M1083.6 81.6L1098.0 108.8M1069.2 97.7L1069.2 76.4M1022.6 108.6L1037.0 92.5M1037.0 92.5L1051.3 119.7M1022.6 108.6L1022.6 87.3M976.0 119.5L990.4 103.4M990.4 103.4L1004.8 130.6M976.0 119.5L976.0 98.2M929.4 130.4L943.8 114.3M943.8 114.3L958.2 141.5M929.4 130.4L929.4 109.1M882.8 141.3L897.2 125.2M897.2 125.2L911.5 152.4M882.8 141.3L882.8 120.0M836.2 152.2L850.6 136.1M850.6 136.1L865.0 163.3M836.2 152.2L836.2 130.9M789.6 163.1L804.0 147.0M804.0 147.0L818.4 174.2M789.6 163.1L789.6 141.8M743.0 174.0L757.4 157.9M757.4 157.9L771.8 185.1M743.0 174.0L743.0 152.7M696.4 184.9L710.8 168.8M710.8 168.8L725.1 196.0M696.4 184.9L696.4 163.6M649.8 195.8L664.2 179.7M664.2 179.7L678.5 206.9M649.8 195.8L649.8 174.5M603.2 206.7L617.6 190.6M617.6 190.6L632.0 217.8M603.2 206.7L603.2 185.4M556.6 217.6L571.0 201.5M571.0 201.5L585.4 228.7M556.6 217.6L556.6 196.3" stroke="#0c9ef0" stroke-width="2.02" fill="none" stroke-linecap="round"/>
<path d="M1144.6 162.8L1144.6 76.1M1098.0 173.7L1098.0 87.0M1051.3 184.6L1051.3 97.9M1004.8 195.5L1004.8 108.8M958.2 206.4L958.2 119.7M911.5 217.3L911.5 130.6M865.0 228.2L865.0 141.5M818.4 239.1L818.4 152.4M771.8 250.0L771.8 163.3M725.1 260.9L725.1 174.2M678.5 271.8L678.5 185.1M632.0 282.7L632.0 196.0M585.4 293.6L585.4 206.9M538.8 304.5L538.8 217.8" stroke="#0c9ef0" stroke-width="3.24" fill="none" stroke-linecap="round"/>
<path d="M330.6 184.8L936.4 43.1" stroke="#0c9ef0" stroke-width="1.79" fill="none" stroke-linecap="round"/>
<path d="M361.7 186.0L967.5 44.3" stroke="#0c9ef0" stroke-width="1.89" fill="none" stroke-linecap="round"/>
<path d="M392.8 186.9L998.6 45.2" stroke="#0c9ef0" stroke-width="1.98" fill="none" stroke-linecap="round"/>
<path d="M423.9 187.5L1029.7 45.8" stroke="#0c9ef0" stroke-width="2.07" fill="none" stroke-linecap="round"/>
<path d="M455.0 188.0L1060.8 46.3" stroke="#0c9ef0" stroke-width="2.16" fill="none" stroke-linecap="round"/>
<path d="M483.7 197.9L1089.5 56.2" stroke="#0c9ef0" stroke-width="2.25" fill="none" stroke-linecap="round"/>
<path d="M510.0 207.2L1115.8 65.5" stroke="#0c9ef0" stroke-width="2.33" fill="none" stroke-linecap="round"/>
<path d="M538.8 217.8L1144.6 76.1M455.0 285.8L455.0 188.0" stroke="#0c9ef0" stroke-width="3.12" fill="none" stroke-linecap="round"/>
<path d="M538.8 239.6L1144.6 97.9" stroke="#0c9ef0" stroke-width="2.70" fill="none" stroke-linecap="round"/>
<path d="M408.3 193.3L967.5 62.5" stroke="#0c9ef0" stroke-width="1.55" fill="none" stroke-linecap="round"/>
<path d="M501.6 197.2L1060.8 66.4" stroke="#0c9ef0" stroke-width="1.78" fill="none" stroke-linecap="round"/>
<path d="M538.8 239.6L562.0 212.3M562.0 212.3L585.4 228.7M585.4 228.7L608.6 201.4M608.6 201.4L632.0 217.8M632.0 217.8L655.2 190.5M655.2 190.5L678.5 206.9M678.5 206.9L701.9 179.6M701.9 179.6L725.1 196.0M725.1 196.0L748.5 168.7M748.5 168.7L771.8 185.1M771.8 185.1L795.0 157.8M795.0 157.8L818.4 174.2M818.4 174.2L841.7 146.9M841.7 146.9L865.0 163.3M865.0 163.3L888.2 136.0M888.2 136.0L911.5 152.4M911.5 152.4L934.9 125.1M934.9 125.1L958.2 141.5M958.2 141.5L981.5 114.2M981.5 114.2L1004.8 130.6M1004.8 130.6L1028.0 103.3M1028.0 103.3L1051.3 119.7M1051.3 119.7L1074.7 92.4M1074.7 92.4L1098.0 108.8M1098.0 108.8L1121.2 81.5M1121.2 81.5L1144.6 97.9" stroke="#0c9ef0" stroke-width="2.06" fill="none" stroke-linecap="round"/>
<path d="M351.7 262.7L351.7 185.6" stroke="#0c9ef0" stroke-width="2.67" fill="none" stroke-linecap="round"/>
<path d="M403.2 274.2L403.2 187.1" stroke="#0c9ef0" stroke-width="2.90" fill="none" stroke-linecap="round"/>
<path d="M491.0 293.8L491.0 200.4" stroke="#0c9ef0" stroke-width="3.27" fill="none" stroke-linecap="round"/>
<path d="M299.5 204.0L351.7 213.8" stroke="#0c9ef0" stroke-width="2.30" fill="none" stroke-linecap="round"/>
<path d="M299.5 183.5L317.4 207.0M317.4 207.0L325.8 184.7M325.8 184.7L335.4 210.5M335.4 210.5L351.7 185.6" stroke="#0c9ef0" stroke-width="1.52" fill="none" stroke-linecap="round"/>
<path d="M351.7 214.9L373.2 186.3" stroke="#0c9ef0" stroke-width="1.58" fill="none" stroke-linecap="round"/>
<path d="M403.2 223.6L381.7 186.6M403.2 223.6L424.7 187.6" stroke="#0c9ef0" stroke-width="1.71" fill="none" stroke-linecap="round"/>
<path d="M455.0 232.4L433.5 187.7M455.0 232.4L476.5 195.4" stroke="#0c9ef0" stroke-width="1.85" fill="none" stroke-linecap="round"/>
<path d="M351.7 213.8L373.2 186.3" stroke="#0c9ef0" stroke-width="1.59" fill="none" stroke-linecap="round"/>
<path d="M491.0 233.6L538.8 244.1" stroke="#0c9ef0" stroke-width="3.03" fill="none" stroke-linecap="round"/>
<path d="M538.8 237.7L911.5 150.5" stroke="#0c9ef0" stroke-width="3.00" fill="none" stroke-linecap="round"/>
<path d="M560.0 245.9L932.5 159.0M584.7 255.4L957.0 169.0" stroke="#0c9ef0" stroke-width="2.70" fill="none" stroke-linecap="round"/>
<path d="M609.5 265.0L981.5 179.0" stroke="#0c9ef0" stroke-width="3.40" fill="none" stroke-linecap="round"/>
<path d="M538.8 237.7L609.5 265.0M585.4 226.8L656.0 254.2M632.0 215.9L702.5 243.5M678.5 205.0L749.0 232.8M725.1 194.1L795.5 222.0M771.8 183.2L842.0 211.2M818.4 172.3L888.5 200.5M865.0 161.4L935.0 189.8" stroke="#0c9ef0" stroke-width="3.80" fill="none" stroke-linecap="round"/>
<path d="M609.5 279.0L616.0 266.0M609.5 279.0L604.0 267.0M656.0 268.2L662.5 255.2M656.0 268.2L650.5 256.2M702.5 257.5L709.0 244.5M702.5 257.5L697.0 245.5M749.0 246.8L755.5 233.8M749.0 246.8L743.5 234.8M795.5 236.0L802.0 223.0M795.5 236.0L790.0 224.0M842.0 225.2L848.5 212.2M842.0 225.2L836.5 213.2M888.5 214.5L895.0 201.5M888.5 214.5L883.0 202.5M935.0 203.8L941.5 190.8M935.0 203.8L929.5 191.8" stroke="#0c9ef0" stroke-width="2.00" fill="none" stroke-linecap="round"/>
<path d="M609.5 324.5L609.5 268.0M656.0 313.8L656.0 257.2M702.5 303.0L702.5 246.5M749.0 292.2L749.0 235.8M795.5 281.5L795.5 225.0M842.0 270.8L842.0 214.2M888.5 260.0L888.5 203.5M935.0 249.2L935.0 192.8" stroke="#0c9ef0" stroke-width="4.90" fill="none" stroke-linecap="butt"/>
<g opacity="0.82">
<polygon points="827.0,112.5 843.0,108.0 857.5,111.0 842.0,116.0" fill="#b9b6b2" />
<polygon points="827.0,112.5 842.0,116.0 842.0,137.0 827.0,131.5" fill="#c9ccd4" />
<polygon points="842.0,116.0 857.5,111.0 857.5,131.0 842.0,137.0" fill="#c6c2c0" />
<path d="M832.0 113.7L832.0 133.3M847.1 114.3L847.1 135.0M827.0 118.8L842.0 122.9M842.0 122.9L857.5 117.6M836.9 114.8L836.9 135.1M852.2 112.7L852.2 133.0M827.0 125.0L842.0 129.9M842.0 129.9L857.5 124.2" stroke="#8c8c90" stroke-width="0.5" fill="none"/>
</g>
<text x="832" y="125.5" font-size="4" fill="#2cb02c" font-family="Liberation Sans, sans-serif" font-weight="bold">+Y</text>
<text x="847" y="125" font-size="4" fill="#e03030" font-family="Liberation Sans, sans-serif" font-weight="bold">-X</text>
</svg>
<div id="ui">
<div class="abs" style="left:0.0px;top:0.0px;width:2560.0px;height:23.0px;background:#e9eff8;"></div>
<div class="abs" style="left:0.0px;top:23.0px;width:2560.0px;height:73.5px;background:#f4f4f4;"></div>
<div class="abs" style="left:4.0px;top:4.0px;width:14.0px;height:9.0px;background:#2a5ea8;border-radius:2px"></div>
<div class="abs" style="left:4.0px;top:12.0px;width:14.0px;height:5.0px;background:#e8c63c;"></div>
<span class="t " style="left:23.0px;top:3.5px;font-size:11.5px;letter-spacing:-0.05px">Dlubal RFEM | 6.12.0009 | 10_07_2024_TotalDM_GTA_for Andreas Horold.rf6*</span>
<div class="abs" style="left:2437.0px;top:11.5px;width:11.0px;height:1.2px;background:#333;"></div>
<div class="abs" style="left:2483px;top:7px;width:9px;height:9px;border:1.3px solid #333;border-radius:2px"></div>
<div class="abs" style="left:2481px;top:5px;width:9px;height:3px;border-top:1.3px solid #333;border-right:1.3px solid #333;border-radius:0 2px 0 0;transform:translate(3.5px,0)"></div>
<svg class="abs" style="left:2528px;top:6px" width="11" height="11"><path d="M0.5 0.5L10.5 10.5M10.5 0.5L0.5 10.5" stroke="#333" stroke-width="1.3"/></svg>
<div class="abs" style="left:2.0px;top:26.0px;width:15.0px;height:13.0px;background:#2e4f9a;border-radius:1px"></div>
<div class="abs" style="left:4.0px;top:28.0px;width:11.0px;height:4.0px;background:#9fb4e6;"></div>
<span class="t " style="left:21.5px;top:24.3px;">File</span>
<span class="t " style="left:48.0px;top:24.3px;">Edit</span>
<span class="t " style="left:76.0px;top:24.3px;">View</span>
<span class="t " style="left:109.0px;top:24.3px;">Insert</span>
<span class="t " style="left:146.0px;top:24.3px;">Assign</span>
<span class="t " style="left:187.0px;top:24.3px;">Calculate</span>
<span class="t " style="left:241.0px;top:24.3px;">Results</span>
<span class="t " style="left:285.0px;top:24.3px;">Tools</span>
<span class="t " style="left:317.0px;top:24.3px;">Options</span>
<span class="t " style="left:364.5px;top:24.3px;">Window</span>
<span class="t " style="left:413.0px;top:24.3px;">CAD-BIM</span>
<span class="t " style="left:466.0px;top:24.3px;">Help</span>
<div class="abs" style="left:1990.0px;top:24.5px;width:228.0px;height:17.0px;background:#e8ebf7;"></div>
<div class="dd" style="left:1977px;top:30px;border-top:3px solid transparent;border-bottom:3px solid transparent;border-left:4px solid #555;border-right:none"></div>
<span class="t " style="left:1994.0px;top:24.5px;color:#8a8a96">Type a keyword (Alt+Q)</span>
<div class="abs" style="left:2232.0px;top:27.0px;width:12.0px;height:11.0px;background:#d9d2bc;border:1px solid #9a9a9a"></div>
<span class="t " style="left:2245.0px;top:24.5px;">Online License 33 | Martin Motlík | Dlubal Software s.r.o.</span>
<div class="abs" style="left:2513.0px;top:36.0px;width:7.0px;height:2.0px;background:#333;"></div>
<div class="abs" style="left:2531.0px;top:28.0px;width:8.0px;height:8.0px;background:#333;border-radius:1px"></div>
<svg class="abs" style="left:2548px;top:28px" width="9" height="9"><path d="M0.5 0.5L8.5 8.5M8.5 0.5L0.5 8.5" stroke="#222" stroke-width="1.6"/></svg>
<div class="hl" style="left:324.0px;top:44.0px;width:49.5px;height:23px"></div>
<div class="ic" style="left:12.8px;top:48.0px;width:15px;height:15px;background:linear-gradient(135deg,#ead870 0 50%,#8ca0c8 50% 100%);border-radius:3px"></div>
<div class="ic" style="left:37.7px;top:48.0px;width:15px;height:15px;background:linear-gradient(#58b450 0 35%,#f0e08c 35% 100%);border-radius:2px"></div>
<div class="ic" style="left:60.3px;top:48.0px;width:15px;height:15px;background:radial-gradient(#2ca4e8 0 45%,#2ca4e8 46% 100%);border-radius:8px"></div>
<div class="ic" style="left:85.5px;top:48.0px;width:15px;height:15px;background:linear-gradient(#6cc0f4 0 35%,#2c9ce8 35% 100%);border-radius:2px"></div>
<div class="ic" style="left:110.0px;top:48.0px;width:15px;height:15px;background:linear-gradient(#dca060 0 35%,#8494b4 35% 100%);border-radius:2px"></div>
<div class="ic" style="left:134.4px;top:48.0px;width:15px;height:15px;background:linear-gradient(#8a929c 0 35%,#5c646c 35% 100%);border-radius:2px"></div>
<div class="ic" style="left:157.0px;top:48.0px;width:15px;height:15px;background:linear-gradient(#7c848c 0 35%,#4c5460 35% 100%);border-radius:2px"></div>
<div class="dd" style="left:178.5px;top:53.5px;border-top-color:#333"></div>
<div class="ic" style="left:194.7px;top:48.0px;width:15px;height:15px;background:linear-gradient(#f0e8b4 0 35%,#e0d898 35% 100%);border-radius:2px"></div>
<div class="ic" style="left:219.1px;top:48.0px;width:15px;height:15px;background:linear-gradient(#dcdcdc 0 35%,#cacaca 35% 100%);border-radius:2px"></div>
<div class="sep" style="left:241.7px;top:45.5px"></div>
<div class="ic" style="left:247.4px;top:48.0px;width:15px;height:15px;background:linear-gradient(135deg,transparent 0 43%,#bcbcbc 43% 57%,transparent 57% 100%)"></div>
<div class="dd" style="left:268.8px;top:53.5px;border-top-color:#888"></div>
<div class="ic" style="left:286.9px;top:48.0px;width:15px;height:15px;background:linear-gradient(135deg,transparent 0 43%,#bcbcbc 43% 57%,transparent 57% 100%)"></div>
<div class="dd" style="left:306.5px;top:53.5px;border-top-color:#888"></div>
<div class="sep" style="left:320.0px;top:45.5px"></div>
<div class="ic" style="left:328.3px;top:48.0px;width:15px;height:15px;background:linear-gradient(#6488c4 0 35%,#94a0b4 35% 100%);border-radius:2px"></div>
<div class="ic" style="left:353.9px;top:48.0px;width:15px;height:15px;background:linear-gradient(#6488c4 0 35%,#9ca8b8 35% 100%);border-radius:2px"></div>
<div class="ic" style="left:374.6px;top:48.0px;width:15px;height:15px;background:linear-gradient(transparent 0 20%,#5098cc 20% 38%,transparent 38% 60%,#5098cc 60% 78%,transparent 78%)"></div>
<div class="ic" style="left:399.1px;top:48.0px;width:15px;height:15px;background:linear-gradient(#d85050 0 35%,#8c98a8 35% 100%);border-radius:2px"></div>
<div class="ic" style="left:423.5px;top:48.0px;width:15px;height:15px;background:linear-gradient(#8090a8 0 35%,#acacac 35% 100%);border-radius:2px"></div>
<div class="ic" style="left:448.0px;top:48.0px;width:15px;height:15px;background:linear-gradient(#4070b8 0 35%,#5c6470 35% 100%);border-radius:2px"></div>
<div class="ic" style="left:472.5px;top:48.0px;width:15px;height:15px;background:linear-gradient(135deg,#808898 0 50%,#5080c8 50% 100%);border-radius:3px"></div>
<div class="ic" style="left:495.1px;top:48.0px;width:15px;height:15px;background:linear-gradient(#a0a8b8 0 35%,#7090c8 35% 100%);border-radius:2px"></div>
<div class="ic" style="left:519.5px;top:48.0px;width:15px;height:15px;background:radial-gradient(#909090 0 45%,#b4b4b4 46% 100%);border-radius:8px"></div>
<div class="sep" style="left:542.0px;top:45.5px"></div>
<div class="ic" style="left:551.5px;top:48.0px;width:15px;height:15px;background:linear-gradient(135deg,#ecc830 0 50%,#d85040 50% 100%);border-radius:3px"></div>
<div class="dd" style="left:573.8px;top:53.5px;border-top-color:#333"></div>
<div class="ic" style="left:590.2px;top:49.0px;width:13px;height:13px;border:2px solid #e8d448;background:#6c6434"></div>
<div class="sep" style="left:611.7px;top:45.5px"></div>
<div class="ic" style="left:621.2px;top:48.0px;width:15px;height:15px;background:linear-gradient(135deg,#50a850 0 50%,#b450c4 50% 100%);border-radius:3px"></div>
<div class="ic" style="left:645.7px;top:48.0px;width:15px;height:15px;background:linear-gradient(135deg,#4088d4 0 50%,#50b450 50% 100%);border-radius:3px"></div>
<div class="abs" style="left:668.0px;top:45.5px;width:268.0px;height:20.0px;background:#e6eaf6;"></div>
<div class="abs" style="left:670.0px;top:48.0px;width:33.0px;height:15.0px;background:#e0504c;border-radius:1px"></div>
<span class="t " style="left:673.0px;top:47.5px;color:#fff;font-size:10.5px">ULS</span>
<span class="t " style="left:708.0px;top:47.5px;">DS1</span>
<span class="t " style="left:775.0px;top:47.5px;">1st-order analysis</span>
<div class="chev" style="left:921.0px;top:50.5px;transform:rotate(45deg)"></div>
<div class="dd" style="left:944px;top:51.5px;border-top:4px solid transparent;border-bottom:4px solid transparent;border-right:5px solid #333;border-left:none"></div>
<div class="dd" style="left:962px;top:51.5px;border-top:4px solid transparent;border-bottom:4px solid transparent;border-left:5px solid #333;border-right:none"></div>
<div class="ic" style="left:972.4px;top:48.0px;width:15px;height:15px;background:linear-gradient(135deg,#2c7cd4 0 50%,#d6322c 50% 100%);border-radius:3px"></div>
<div class="dd" style="left:996.6px;top:53.5px;border-top-color:#333"></div>
<div class="ic" style="left:1009.8px;top:48.0px;width:15px;height:15px;background:linear-gradient(135deg,transparent 0 43%,#8c8c8c 43% 57%,transparent 57% 100%)"></div>
<div class="ic" style="left:1034.5px;top:48.0px;width:15px;height:15px;background:linear-gradient(transparent 0 20%,#9c9ca4 20% 38%,transparent 38% 60%,#9c9ca4 60% 78%,transparent 78%)"></div>
<div class="ic" style="left:1059.5px;top:48.0px;width:15px;height:15px;background:linear-gradient(#8c94a4 0 35%,#4c7cc4 35% 100%);border-radius:2px"></div>
<div class="ic" style="left:1082.5px;top:48.0px;width:15px;height:15px;background:linear-gradient(transparent 0 20%,#9ca4ac 20% 38%,transparent 38% 60%,#7c848c 60% 78%,transparent 78%)"></div>
<div class="ic" style="left:1107.5px;top:48.0px;width:15px;height:15px;background:linear-gradient(#8c8c8c 0 35%,#a4a4a4 35% 100%);border-radius:2px"></div>
<div class="ic" style="left:1130.8px;top:48.0px;width:15px;height:15px;background:linear-gradient(#7ca4d4 0 35%,#4c8cd4 35% 100%);border-radius:2px"></div>
<div class="dd" style="left:1152.0px;top:53.5px;border-top-color:#333"></div>
<div class="ic" style="left:1167.1px;top:48.0px;width:15px;height:15px;background:linear-gradient(135deg,#3c64b4 0 50%,#d44c3c 50% 100%);border-radius:3px"></div>
<div class="ic" style="left:1190.5px;top:48.0px;width:15px;height:15px;background:linear-gradient(transparent 0 20%,#9c9ca4 20% 38%,transparent 38% 60%,#b4b4bc 60% 78%,transparent 78%)"></div>
<div class="sep" style="left:1212.5px;top:45.5px"></div>
<div class="ic" style="left:1219.0px;top:48.0px;width:15px;height:15px;background:linear-gradient(135deg,#4c74c4 0 50%,#d4d4e4 50% 100%);border-radius:3px"></div>
<div class="ic" style="left:1245.0px;top:48.0px;width:15px;height:15px;background:linear-gradient(#e4c444 0 35%,#5c646c 35% 100%);border-radius:2px"></div>
<div class="dd" style="left:1267.7px;top:53.5px;border-top-color:#333"></div>
<div class="sep" style="left:1281.0px;top:45.5px"></div>
<div class="ic" style="left:1288.1px;top:48.0px;width:15px;height:15px;background:linear-gradient(135deg,#6c6c6c 0 50%,#9c9c9c 50% 100%);border-radius:3px"></div>
<div class="ic" style="left:1316.2px;top:48.0px;width:15px;height:15px;background:radial-gradient(#d6322c 0 45%,#8c8c8c 46% 100%);border-radius:8px"></div>
<div class="ic" style="left:1338.5px;top:48.0px;width:15px;height:15px;background:linear-gradient(#acc4ec 0 35%,#8cace4 35% 100%);border-radius:2px"></div>
<div class="ic" style="left:1361.9px;top:48.0px;width:15px;height:15px;background:linear-gradient(#e4d48c 0 35%,#9cb4e4 35% 100%);border-radius:2px"></div>
<div class="ic" style="left:1388.8px;top:49.0px;width:13px;height:13px;border:2px solid #8c9cd4;background:#dce4f8"></div>
<div class="sep" style="left:1409.8px;top:45.5px"></div>
<div class="ic" style="left:1416.4px;top:48.0px;width:15px;height:15px;background:linear-gradient(135deg,#3c9c4c 0 50%,#d43c3c 50% 100%);border-radius:3px"></div>
<div class="ic" style="left:1441.5px;top:48.0px;width:15px;height:15px;background:linear-gradient(135deg,#d4443c 0 50%,#3c9c4c 50% 100%);border-radius:3px"></div>
<div class="ic" style="left:1465.5px;top:48.0px;width:15px;height:15px;background:linear-gradient(135deg,#d43c3c 0 50%,#3c64c4 50% 100%);border-radius:3px"></div>
<div class="ic" style="left:1489.1px;top:48.0px;width:15px;height:15px;background:linear-gradient(135deg,#3c9c4c 0 50%,#d43c3c 50% 100%);border-radius:3px"></div>
<div class="dd" style="left:1510.7px;top:53.5px;border-top-color:#333"></div>
<div class="ic" style="left:1522.8px;top:48.0px;width:15px;height:15px;background:linear-gradient(135deg,#e4d444 0 50%,#6c6c74 50% 100%);border-radius:3px"></div>
<div class="dd" style="left:1547.0px;top:53.5px;border-top-color:#333"></div>
<div class="sep" style="left:1561.0px;top:45.5px"></div>
<div class="ic" style="left:1569.5px;top:48.0px;width:15px;height:15px;background:linear-gradient(#7cace4 0 35%,#3c74c4 35% 100%);border-radius:2px"></div>
<div class="dd" style="left:1591.0px;top:53.5px;border-top-color:#333"></div>
<div class="ic" style="left:1605.9px;top:48.0px;width:15px;height:15px;background:linear-gradient(transparent 0 20%,#5c9cdc 20% 38%,transparent 38% 60%,#5c9cdc 60% 78%,transparent 78%)"></div>
<div class="dd" style="left:1626.0px;top:53.5px;border-top-color:#333"></div>
<div class="ic" style="left:1639.7px;top:48.0px;width:15px;height:15px;background:linear-gradient(transparent 0 20%,#6c6c74 20% 38%,transparent 38% 60%,#6c6c74 60% 78%,transparent 78%)"></div>
<div class="dd" style="left:1661.0px;top:53.5px;border-top-color:#333"></div>
<div class="ic" style="left:1679.7px;top:48.0px;width:15px;height:15px;background:linear-gradient(135deg,#8c8c94 0 50%,#a4a4ac 50% 100%);border-radius:3px"></div>
<div class="dd" style="left:1699.0px;top:53.5px;border-top-color:#888"></div>
<div class="ic" style="left:1712.3px;top:48.0px;width:15px;height:15px;background:linear-gradient(#dcdcdc 0 35%,#c8c8c8 35% 100%);border-radius:2px"></div>
<div class="dd" style="left:1734.0px;top:53.5px;border-top-color:#888"></div>
<div class="ic" style="left:1748.7px;top:48.0px;width:15px;height:15px;background:radial-gradient(#d44444 0 45%,#4c64c4 46% 100%);border-radius:8px"></div>
<div class="ic" style="left:1773.6px;top:48.0px;width:15px;height:15px;background:linear-gradient(#f4b450 0 35%,#f0a030 35% 100%);border-radius:2px"></div>
<div class="ic" style="left:1798.0px;top:48.0px;width:15px;height:15px;background:linear-gradient(#8cc4ec 0 35%,#3c4c9c 35% 100%);border-radius:2px"></div>
<div class="hl" style="left:1156.5px;top:71.3px;width:23.5px;height:23px"></div>
<div class="ic" style="left:10.2px;top:75.3px;width:15px;height:15px;background:radial-gradient(#ecd44c 0 45%,#ecd44c 46% 100%);border-radius:8px"></div>
<div class="dd" style="left:33.5px;top:80.8px;border-top-color:#333"></div>
<div class="ic" style="left:49.7px;top:75.3px;width:15px;height:15px;background:linear-gradient(135deg,transparent 0 43%,#ecd44c 43% 57%,transparent 57% 100%)"></div>
<div class="ic" style="left:73.1px;top:75.3px;width:15px;height:15px;background:linear-gradient(135deg,transparent 0 43%,#e4d45c 43% 57%,transparent 57% 100%)"></div>
<div class="dd" style="left:93.8px;top:80.8px;border-top-color:#333"></div>
<div class="ic" style="left:112.8px;top:76.3px;width:13px;height:13px;border:2px solid #e4d45c;background:#d6322c"></div>
<div class="dd" style="left:131.4px;top:80.8px;border-top-color:#333"></div>
<div class="sep" style="left:143.0px;top:72.8px"></div>
<div class="ic" style="left:151.4px;top:75.3px;width:15px;height:15px;background:radial-gradient(#2c9c3c 0 45%,#d43c3c 46% 100%);border-radius:8px"></div>
<div class="ic" style="left:175.9px;top:75.3px;width:15px;height:15px;background:linear-gradient(#e4d444 0 35%,#3c943c 35% 100%);border-radius:2px"></div>
<div class="ic" style="left:200.3px;top:75.3px;width:15px;height:15px;background:linear-gradient(#4c84d4 0 35%,#3c943c 35% 100%);border-radius:2px"></div>
<div class="sep" style="left:224.7px;top:72.8px"></div>
<div class="ic" style="left:230.4px;top:75.3px;width:15px;height:15px;background:linear-gradient(135deg,#4c84d4 0 50%,#e4d444 50% 100%);border-radius:3px"></div>
<div class="dd" style="left:253.8px;top:80.8px;border-top-color:#333"></div>
<div class="ic" style="left:268.1px;top:75.3px;width:15px;height:15px;background:linear-gradient(135deg,#4c84d4 0 50%,#d44c3c 50% 100%);border-radius:3px"></div>
<div class="dd" style="left:289.5px;top:80.8px;border-top-color:#333"></div>
<div class="ic" style="left:304.9px;top:76.3px;width:13px;height:13px;border:2px solid #d6322c;background:#ffffff"></div>
<div class="dd" style="left:325.3px;top:80.8px;border-top-color:#333"></div>
<div class="ic" style="left:344.5px;top:75.3px;width:15px;height:15px;background:linear-gradient(135deg,#3c74c4 0 50%,#d44c3c 50% 100%);border-radius:3px"></div>
<div class="dd" style="left:362.5px;top:80.8px;border-top-color:#333"></div>
<div class="ic" style="left:376.5px;top:75.3px;width:15px;height:15px;background:linear-gradient(#e4d444 0 35%,#6caee4 35% 100%);border-radius:2px"></div>
<div class="sep" style="left:399.0px;top:72.8px"></div>
<div class="ic" style="left:406.6px;top:75.3px;width:15px;height:15px;background:linear-gradient(135deg,transparent 0 43%,#c8c8c8 43% 57%,transparent 57% 100%)"></div>
<div class="dd" style="left:429.2px;top:80.8px;border-top-color:#999"></div>
<div class="sep" style="left:440.5px;top:72.8px"></div>
<div class="ic" style="left:448.0px;top:75.3px;width:15px;height:15px;background:linear-gradient(#d4443c 0 35%,#e4d444 35% 100%);border-radius:2px"></div>
<div class="ic" style="left:472.5px;top:75.3px;width:15px;height:15px;background:linear-gradient(#d4443c 0 35%,#5c94d4 35% 100%);border-radius:2px"></div>
<div class="ic" style="left:497.0px;top:75.3px;width:15px;height:15px;background:linear-gradient(#d4443c 0 35%,#5c94d4 35% 100%);border-radius:2px"></div>
<div class="ic" style="left:521.4px;top:75.3px;width:15px;height:15px;background:linear-gradient(#7c8c9c 0 35%,#5c94d4 35% 100%);border-radius:2px"></div>
<div class="ic" style="left:545.9px;top:75.3px;width:9px;height:9px;background:#3c8c4c"></div><div class="ic" style="left:551.9px;top:81.3px;width:10px;height:10px;background:#7c7c84"></div>
<div class="dd" style="left:568.5px;top:80.8px;border-top-color:#333"></div>
<div class="ic" style="left:579.8px;top:75.3px;width:15px;height:15px;background:linear-gradient(#e4d444 0 35%,#4c8cd4 35% 100%);border-radius:2px"></div>
<div class="dd" style="left:604.2px;top:80.8px;border-top-color:#333"></div>
<div class="sep" style="left:619.2px;top:72.8px"></div>
<div class="ic" style="left:626.8px;top:75.3px;width:15px;height:15px;background:radial-gradient(#2c74d4 0 45%,#5c9ce4 46% 100%);border-radius:8px"></div>
<div class="sep" style="left:649.4px;top:72.8px"></div>
<div class="ic" style="left:659.1px;top:76.3px;width:13px;height:13px;border:2px solid #5c7cb4;background:#f4f4f4"></div>
<div class="ic" style="left:682.5px;top:76.3px;width:13px;height:13px;border:2px solid #8c8c8c;background:#f4f4f4"></div>
<div class="ic" style="left:706.0px;top:76.3px;width:13px;height:13px;border:2px solid #a4a4a4;background:#f4f4f4"></div>
<div class="sep" style="left:727.0px;top:72.8px"></div>
<div class="ic" style="left:736.1px;top:75.3px;width:15px;height:15px;background:linear-gradient(135deg,transparent 0 43%,#a4a4a4 43% 57%,transparent 57% 100%)"></div>
<div class="ic" style="left:762.0px;top:75.3px;width:15px;height:15px;background:linear-gradient(transparent 0 20%,#9c9c9c 20% 38%,transparent 38% 60%,#9c9c9c 60% 78%,transparent 78%)"></div>
<div class="ic" style="left:787.9px;top:75.3px;width:15px;height:15px;background:linear-gradient(#5c5c64 0 35%,#8c8c8c 35% 100%);border-radius:2px"></div>
<div class="ic" style="left:810.5px;top:75.3px;width:15px;height:15px;background:linear-gradient(135deg,transparent 0 43%,#8c8c8c 43% 57%,transparent 57% 100%)"></div>
<div class="ic" style="left:833.1px;top:75.3px;width:15px;height:15px;background:linear-gradient(135deg,transparent 0 43%,#a4a4a4 43% 57%,transparent 57% 100%)"></div>
<div class="sep" style="left:856.0px;top:72.8px"></div>
<div class="ic" style="left:864.4px;top:75.3px;width:15px;height:15px;background:linear-gradient(transparent 0 20%,#6c6c74 20% 38%,transparent 38% 60%,#6c6c74 60% 78%,transparent 78%)"></div>
<div class="ic" style="left:889.4px;top:75.3px;width:15px;height:15px;background:linear-gradient(transparent 0 20%,#6c6c74 20% 38%,transparent 38% 60%,#6c6c74 60% 78%,transparent 78%)"></div>
<div class="ic" style="left:912.5px;top:75.3px;width:15px;height:15px;background:linear-gradient(transparent 0 20%,#6c6c74 20% 38%,transparent 38% 60%,#6c6c74 60% 78%,transparent 78%)"></div>
<div class="ic" style="left:936.1px;top:75.3px;width:15px;height:15px;background:linear-gradient(transparent 0 20%,#6c6c74 20% 38%,transparent 38% 60%,#5c5c64 60% 78%,transparent 78%)"></div>
<div class="ic" style="left:959.3px;top:75.3px;width:15px;height:15px;background:linear-gradient(transparent 0 20%,#8c8c94 20% 38%,transparent 38% 60%,#8c8c94 60% 78%,transparent 78%)"></div>
<div class="ic" style="left:985.5px;top:75.3px;width:15px;height:15px;background:linear-gradient(135deg,transparent 0 43%,#9c9c9c 43% 57%,transparent 57% 100%)"></div>
<div class="ic" style="left:1011.4px;top:75.3px;width:15px;height:15px;background:linear-gradient(135deg,#e4c43c 0 50%,#3c64c4 50% 100%);border-radius:3px"></div>
<div class="ic" style="left:1034.5px;top:75.3px;width:15px;height:15px;background:linear-gradient(135deg,transparent 0 43%,#d43cb4 43% 57%,transparent 57% 100%)"></div>
<div class="sep" style="left:1056.0px;top:72.8px"></div>
<div class="ic" style="left:1063.2px;top:75.3px;width:15px;height:15px;background:linear-gradient(135deg,transparent 0 43%,#7c848c 43% 57%,transparent 57% 100%)"></div>
<div class="dd" style="left:1086.0px;top:80.8px;border-top-color:#777"></div>
<div class="sep" style="left:1102.0px;top:72.8px"></div>
<div class="ic" style="left:1109.9px;top:75.3px;width:15px;height:15px;background:linear-gradient(#acb4c4 0 35%,#7c8ca4 35% 100%);border-radius:2px"></div>
<div class="ic" style="left:1133.4px;top:75.3px;width:15px;height:15px;background:radial-gradient(#6c7cc4 0 45%,#acb4e4 46% 100%);border-radius:8px"></div>
<div class="ic" style="left:1160.5px;top:75.3px;width:15px;height:15px;background:linear-gradient(135deg,#3c64c4 0 50%,#d44c4c 50% 100%);border-radius:3px"></div>
<div class="ic" style="left:1184.3px;top:75.3px;width:15px;height:15px;background:radial-gradient(#4c64b4 0 45%,#d44c4c 46% 100%);border-radius:8px"></div>
<div class="ic" style="left:1203.3px;top:75.3px;width:15px;height:15px;background:radial-gradient(#5c64a4 0 45%,#d4444c 46% 100%);border-radius:8px"></div>
<div class="sep" style="left:1228.0px;top:72.8px"></div>
<div class="ic" style="left:1239.7px;top:75.3px;width:15px;height:15px;background:linear-gradient(135deg,transparent 0 43%,#c8c8c8 43% 57%,transparent 57% 100%)"></div>
<div class="ic" style="left:1263.2px;top:75.3px;width:15px;height:15px;background:radial-gradient(#c8c8c8 0 45%,#e4e4e4 46% 100%);border-radius:8px"></div>
<div class="ic" style="left:1286.7px;top:75.3px;width:15px;height:15px;background:linear-gradient(135deg,#c8c8c8 0 50%,#dcdcdc 50% 100%);border-radius:3px"></div>
<div class="ic" style="left:1309.9px;top:75.3px;width:15px;height:15px;background:linear-gradient(135deg,transparent 0 43%,#d6322c 43% 57%,transparent 57% 100%)"></div>
<div class="ic" style="left:1335.9px;top:76.3px;width:13px;height:13px;border:2px solid #5c5c5c;background:#f4f4f4"></div>
<div class="ic" style="left:1367.1px;top:75.3px;width:15px;height:15px;background:linear-gradient(#3c74c4 0 35%,#5c646c 35% 100%);border-radius:2px"></div>
<div class="ic" style="left:1392.1px;top:75.3px;width:15px;height:15px;background:linear-gradient(#7c848c 0 35%,#5c646c 35% 100%);border-radius:2px"></div>
<div class="ic" style="left:1414.7px;top:75.3px;width:15px;height:15px;background:linear-gradient(#3c74c4 0 35%,#4c5c74 35% 100%);border-radius:2px"></div>
<div class="abs" style="left:1438.0px;top:77.8px;width:10.0px;height:10.0px;background:#2ca42c;border-radius:5px"></div>
<div class="abs" style="left:1453.0px;top:78.8px;width:9.0px;height:9.0px;background:#e4c42c;border-radius:2px 2px 5px 5px"></div>
<div class="abs" style="left:1467.0px;top:78.8px;width:10.0px;height:9.0px;background:#3c3c3c;"></div>
<div class="abs" style="left:1484.0px;top:72.8px;width:150.0px;height:20.0px;background:#e6eaf6;"></div>
<div class="abs" style="left:1486.0px;top:75.8px;width:17.0px;height:14.0px;background:#b6f6f6;"></div>
<span class="t " style="left:1512.0px;top:74.8px;">1 - Default Base Layer</span>
<div class="chev" style="left:1621.0px;top:77.8px;transform:rotate(45deg)"></div>
<div class="ic" style="left:1642.2px;top:75.3px;width:15px;height:15px;background:linear-gradient(135deg,#2c7cd4 0 50%,#d4342c 50% 100%);border-radius:3px"></div>
<div class="dd" style="left:1663.0px;top:80.8px;border-top-color:#333"></div>
<div class="abs" style="left:0.0px;top:96.0px;width:297.0px;height:1301.0px;background:#ffffff;"></div>
<div class="abs" style="left:296.0px;top:96.0px;width:1.0px;height:1301.0px;background:#d0d0d0;"></div>
<div class="abs" style="left:297.0px;top:96.0px;width:3.5px;height:1344.0px;background:#f0f0f0;"></div>
<div class="abs" style="left:0.0px;top:97.5px;width:296.0px;height:21.0px;background:#cfe2f4;"></div>
<span class="t b" style="left:5.0px;top:100.0px;">Navigator - Data</span>
<div class="abs" style="left:262.0px;top:103.0px;width:8.0px;height:9.0px;background:#444;border-radius:1px"></div>
<svg class="abs" style="left:281px;top:103px" width="10" height="10"><path d="M1 1L9 9M9 1L1 9" stroke="#333" stroke-width="1.8"/></svg>
<div class="abs" style="left:0;top:96px;width:296px;height:1270px;overflow:hidden">
<div class="abs" style="left:2.0px;top:27.6px;width:15.0px;height:12.0px;background:#34509c;border-radius:1px"></div>
<div class="abs" style="left:4.0px;top:29.6px;width:11.0px;height:4.0px;background:#a8bcec;"></div>
<span class="t " style="left:25.0px;top:25.6px;">RFEM</span>
<div class="chev" style="left:7.0px;top:46.6px;transform:rotate(45deg)"></div>
<div class="abs" style="left:25.0px;top:43.6px;width:12.0px;height:15.0px;background:#ffffff;border:1px solid #5c6c8c"></div>
<div class="abs" style="left:28.0px;top:48.6px;width:7.0px;height:6.0px;background:#5c84c4;"></div>
<span class="t b" style="left:45.5px;top:43.6px;font-size:10.5px;letter-spacing:-0.05px;">10_07_2024_TotalDM_GTA_for Andreas Horold.rf6*</span>
<div class="chev" style="left:26.8px;top:64.6px;transform:rotate(45deg)"></div>
<div class="abs" style="left:42.7px;top:62.6px;width:7px;height:3px;background:#ecd684;border-radius:1px 1px 0 0"></div><div class="abs" style="left:42.7px;top:64.6px;width:16px;height:12px;background:#f8e9ac;border:1px solid #e6d080;border-radius:1px"></div>
<span class="t " style="left:65.0px;top:61.6px;">Basic Objects</span>
<div class="chev" style="left:44.6px;top:84.6px;transform:rotate(-45deg)"></div>
<div class="abs" style="left:63.4px;top:80.6px;width:6.0px;height:6.0px;background:#2cac2c;"></div>
<div class="abs" style="left:71.4px;top:80.6px;width:6.0px;height:6.0px;background:#ecc42c;"></div>
<div class="abs" style="left:63.4px;top:88.6px;width:6.0px;height:6.0px;background:#dc3c2c;"></div>
<div class="abs" style="left:71.4px;top:88.6px;width:6.0px;height:6.0px;background:#dc3c2c;"></div>
<span class="t " style="left:84.5px;top:79.6px;">Materials</span>
<div class="chev" style="left:44.6px;top:102.6px;transform:rotate(-45deg)"></div>
<div class="abs" style="left:64.4px;top:98.6px;width:12.0px;height:3.0px;background:#d4342c;"></div>
<div class="abs" style="left:68.4px;top:100.6px;width:4.0px;height:10.0px;background:#3c54c4;"></div>
<div class="abs" style="left:64.4px;top:109.6px;width:12.0px;height:3.0px;background:#d4342c;"></div>
<span class="t " style="left:84.5px;top:97.6px;">Cross-Sections</span>
<div class="chev" style="left:44.6px;top:120.7px;transform:rotate(-45deg)"></div>
<div class="ic" style="left:63.4px;top:116.7px;width:14px;height:14px;background:linear-gradient(135deg,#3c84dc 0 50%,#9cc4f0 50% 100%);border-radius:3px"></div>
<span class="t " style="left:84.5px;top:115.7px;">Thicknesses</span>
<div class="chev" style="left:44.6px;top:138.7px;transform:rotate(-45deg)"></div>
<div class="abs" style="left:68.4px;top:139.7px;width:4.0px;height:4.0px;background:#dc2c2c;border-radius:2px"></div>
<span class="t " style="left:84.5px;top:133.7px;">Nodes</span>
<div class="chev" style="left:44.6px;top:156.7px;transform:rotate(-45deg)"></div>
<div class="ic" style="left:63.4px;top:152.7px;width:14px;height:14px;background:linear-gradient(135deg,transparent 0 43%,#d4342c 43% 57%,transparent 57% 100%)"></div>
<span class="t " style="left:84.5px;top:151.7px;">Lines</span>
<div class="chev" style="left:44.6px;top:174.7px;transform:rotate(-45deg)"></div>
<div class="ic" style="left:63.4px;top:170.7px;width:14px;height:14px;background:linear-gradient(135deg,transparent 0 43%,#d4342c 43% 57%,transparent 57% 100%)"></div>
<span class="t " style="left:84.5px;top:169.7px;">Members</span>
<div class="chev" style="left:44.6px;top:192.7px;transform:rotate(-45deg)"></div>
<div class="ic" style="left:63.4px;top:188.7px;width:14px;height:14px;background:radial-gradient(#3c8cdc 0 45%,#8cc4f4 46% 100%);border-radius:8px"></div>
<span class="t " style="left:84.5px;top:187.7px;">Surfaces</span>
<div class="ic" style="left:64.4px;top:207.7px;width:12px;height:12px;border:2px solid #3c8cdc;background:#e4f0fc"></div>
<span class="t " style="left:84.5px;top:205.7px;">Openings</span>
<div class="chev" style="left:44.6px;top:228.7px;transform:rotate(-45deg)"></div>
<div class="ic" style="left:63.4px;top:224.7px;width:14px;height:14px;background:linear-gradient(#8cbcf0 0 35%,#3c8cdc 35% 100%);border-radius:2px"></div>
<span class="t " style="left:84.5px;top:223.7px;">Solids</span>
<div class="ic" style="left:63.4px;top:242.7px;width:14px;height:14px;background:linear-gradient(135deg,transparent 0 43%,#c43c34 43% 57%,transparent 57% 100%)"></div>
<span class="t " style="left:84.5px;top:241.7px;">Line Sets</span>
<div class="chev" style="left:44.6px;top:264.7px;transform:rotate(-45deg)"></div>
<div class="ic" style="left:63.4px;top:260.7px;width:14px;height:14px;background:linear-gradient(135deg,transparent 0 43%,#c43c34 43% 57%,transparent 57% 100%)"></div>
<span class="t " style="left:84.5px;top:259.7px;">Member Sets</span>
<div class="ic" style="left:63.4px;top:278.7px;width:14px;height:14px;background:linear-gradient(135deg,#3c8cdc 0 50%,#6cacec 50% 100%);border-radius:3px"></div>
<span class="t " style="left:84.5px;top:277.7px;">Surface Sets</span>
<div class="ic" style="left:63.4px;top:296.8px;width:9px;height:9px;background:#3c7cd4"></div><div class="ic" style="left:69.4px;top:302.8px;width:10px;height:10px;background:#6c9ce4"></div>
<span class="t " style="left:84.5px;top:295.8px;">Solid Sets</span>
<div class="chev" style="left:24.8px;top:318.8px;transform:rotate(-45deg)"></div>
<div class="abs" style="left:42.7px;top:314.8px;width:7px;height:3px;background:#ecd684;border-radius:1px 1px 0 0"></div><div class="abs" style="left:42.7px;top:316.8px;width:16px;height:12px;background:#f8e9ac;border:1px solid #e6d080;border-radius:1px"></div>
<span class="t " style="left:65.0px;top:313.8px;">Special Objects</span>
<div class="chev" style="left:24.8px;top:336.8px;transform:rotate(-45deg)"></div>
<div class="abs" style="left:42.7px;top:332.8px;width:7px;height:3px;background:#ecd684;border-radius:1px 1px 0 0"></div><div class="abs" style="left:42.7px;top:334.8px;width:16px;height:12px;background:#f8e9ac;border:1px solid #e6d080;border-radius:1px"></div>
<span class="t " style="left:65.0px;top:331.8px;">Types for Nodes</span>
<div class="chev" style="left:24.8px;top:354.8px;transform:rotate(-45deg)"></div>
<div class="abs" style="left:42.7px;top:350.8px;width:7px;height:3px;background:#ecd684;border-radius:1px 1px 0 0"></div><div class="abs" style="left:42.7px;top:352.8px;width:16px;height:12px;background:#f8e9ac;border:1px solid #e6d080;border-radius:1px"></div>
<span class="t " style="left:65.0px;top:349.8px;">Types for Lines</span>
<div class="chev" style="left:24.8px;top:372.8px;transform:rotate(-45deg)"></div>
<div class="abs" style="left:42.7px;top:368.8px;width:7px;height:3px;background:#ecd684;border-radius:1px 1px 0 0"></div><div class="abs" style="left:42.7px;top:370.8px;width:16px;height:12px;background:#f8e9ac;border:1px solid #e6d080;border-radius:1px"></div>
<span class="t " style="left:65.0px;top:367.8px;">Types for Members</span>
<div class="chev" style="left:24.8px;top:390.8px;transform:rotate(-45deg)"></div>
<div class="abs" style="left:42.7px;top:386.8px;width:7px;height:3px;background:#ecd684;border-radius:1px 1px 0 0"></div><div class="abs" style="left:42.7px;top:388.8px;width:16px;height:12px;background:#f8e9ac;border:1px solid #e6d080;border-radius:1px"></div>
<span class="t " style="left:65.0px;top:385.8px;">Types for Surfaces</span>
<div class="chev" style="left:24.8px;top:408.8px;transform:rotate(-45deg)"></div>
<div class="abs" style="left:42.7px;top:404.8px;width:7px;height:3px;background:#ecd684;border-radius:1px 1px 0 0"></div><div class="abs" style="left:42.7px;top:406.8px;width:16px;height:12px;background:#f8e9ac;border:1px solid #e6d080;border-radius:1px"></div>
<span class="t " style="left:65.0px;top:403.8px;">Types for Solids</span>
<div class="chev" style="left:24.8px;top:426.8px;transform:rotate(-45deg)"></div>
<div class="abs" style="left:42.7px;top:422.8px;width:7px;height:3px;background:#ecd684;border-radius:1px 1px 0 0"></div><div class="abs" style="left:42.7px;top:424.8px;width:16px;height:12px;background:#f8e9ac;border:1px solid #e6d080;border-radius:1px"></div>
<span class="t " style="left:65.0px;top:421.8px;">Types for Special Objects</span>
<div class="chev" style="left:24.8px;top:444.8px;transform:rotate(-45deg)"></div>
<div class="abs" style="left:42.7px;top:440.8px;width:7px;height:3px;background:#ecd684;border-radius:1px 1px 0 0"></div><div class="abs" style="left:42.7px;top:442.8px;width:16px;height:12px;background:#f8e9ac;border:1px solid #e6d080;border-radius:1px"></div>
<span class="t " style="left:65.0px;top:439.8px;">Reinforcement</span>
<div class="chev" style="left:24.8px;top:462.8px;transform:rotate(-45deg)"></div>
<div class="abs" style="left:42.7px;top:458.8px;width:7px;height:3px;background:#ecd684;border-radius:1px 1px 0 0"></div><div class="abs" style="left:42.7px;top:460.8px;width:16px;height:12px;background:#f8e9ac;border:1px solid #e6d080;border-radius:1px"></div>
<span class="t " style="left:65.0px;top:457.8px;">Geotechnical Analysis</span>
<div class="chev" style="left:24.8px;top:480.9px;transform:rotate(-45deg)"></div>
<div class="abs" style="left:42.7px;top:476.9px;width:7px;height:3px;background:#ecd684;border-radius:1px 1px 0 0"></div><div class="abs" style="left:42.7px;top:478.9px;width:16px;height:12px;background:#f8e9ac;border:1px solid #e6d080;border-radius:1px"></div>
<span class="t " style="left:65.0px;top:475.9px;">Imperfections</span>
<div class="chev" style="left:26.8px;top:496.9px;transform:rotate(45deg)"></div>
<div class="abs" style="left:42.7px;top:494.9px;width:7px;height:3px;background:#ecd684;border-radius:1px 1px 0 0"></div><div class="abs" style="left:42.7px;top:496.9px;width:16px;height:12px;background:#f8e9ac;border:1px solid #e6d080;border-radius:1px"></div>
<span class="t " style="left:65.0px;top:493.9px;">Load Cases &amp; Combinations</span>
<div class="chev" style="left:44.6px;top:516.9px;transform:rotate(-45deg)"></div>
<div class="abs" style="left:65.4px;top:512.9px;width:1.5px;height:13.0px;background:#3c3c3c;"></div>
<div class="abs" style="left:65.4px;top:524.9px;width:12.0px;height:1.5px;background:#3c64c4;"></div>
<span class="t " style="left:84.5px;top:511.9px;">Load Cases</span>
<div class="chev" style="left:44.6px;top:534.9px;transform:rotate(-45deg)"></div>
<div class="abs" style="left:65.4px;top:531.9px;width:11px;height:11px;border:2px solid #4c4c4c;border-left:none;border-radius:0 5px 5px 0"></div>
<div class="abs" style="left:64.4px;top:531.9px;width:5.0px;height:3.0px;background:#3c64c4;"></div>
<span class="t " style="left:84.5px;top:529.9px;">Actions</span>
<div class="chev" style="left:44.6px;top:552.9px;transform:rotate(-45deg)"></div>
<div class="abs" style="left:65.4px;top:549.9px;width:11px;height:11px;border:2px solid #4c4c4c;border-left:none;border-radius:0 5px 5px 0"></div>
<div class="abs" style="left:64.4px;top:549.9px;width:5.0px;height:3.0px;background:#c43cc4;"></div>
<span class="t " style="left:84.5px;top:547.9px;">Design Situations</span>
<div class="chev" style="left:44.6px;top:570.9px;transform:rotate(-45deg)"></div>
<div class="abs" style="left:65.4px;top:567.9px;width:11px;height:11px;border:2px solid #4c4c4c;border-left:none;border-radius:0 5px 5px 0"></div>
<div class="abs" style="left:64.4px;top:567.9px;width:5.0px;height:3.0px;background:#3c74d4;"></div>
<span class="t " style="left:84.5px;top:565.9px;">Action Combinations</span>
<div class="chev" style="left:44.6px;top:588.9px;transform:rotate(-45deg)"></div>
<div class="abs" style="left:65.4px;top:585.9px;width:11px;height:11px;border:2px solid #4c4c4c;border-left:none;border-radius:0 5px 5px 0"></div>
<div class="abs" style="left:64.4px;top:585.9px;width:5.0px;height:3.0px;background:#2c9c4c;"></div>
<span class="t " style="left:84.5px;top:583.9px;">Load Combinations</span>
<div class="chev" style="left:44.6px;top:606.9px;transform:rotate(-45deg)"></div>
<div class="ic" style="left:63.4px;top:602.9px;width:14px;height:14px;background:linear-gradient(transparent 0 20%,#3c54b4 20% 38%,transparent 38% 60%,#c43c3c 60% 78%,transparent 78%)"></div>
<span class="t " style="left:84.5px;top:601.9px;">Static Analysis Settings</span>
<div class="chev" style="left:44.6px;top:624.9px;transform:rotate(-45deg)"></div>
<div class="abs" style="left:65.4px;top:621.9px;width:11px;height:11px;border:2px solid #4c4c4c;border-left:none;border-radius:0 5px 5px 0"></div>
<div class="abs" style="left:64.4px;top:621.9px;width:5.0px;height:3.0px;background:#6c6c6c;"></div>
<span class="t " style="left:84.5px;top:619.9px;">Combination Wizards</span>
<div class="ic" style="left:64.4px;top:639.9px;width:12px;height:12px;border:2px solid #4c4c4c;background:#ffffff"></div>
<span class="t " style="left:84.5px;top:637.9px;">Relationship Between Load Cases</span>
<div class="chev" style="left:24.8px;top:661.0px;transform:rotate(-45deg)"></div>
<div class="abs" style="left:42.7px;top:657.0px;width:7px;height:3px;background:#ecd684;border-radius:1px 1px 0 0"></div><div class="abs" style="left:42.7px;top:659.0px;width:16px;height:12px;background:#f8e9ac;border:1px solid #e6d080;border-radius:1px"></div>
<span class="t " style="left:65.0px;top:656.0px;">Load Wizards</span>
<div class="chev" style="left:26.8px;top:677.0px;transform:rotate(45deg)"></div>
<div class="abs" style="left:42.7px;top:675.0px;width:7px;height:3px;background:#ecd684;border-radius:1px 1px 0 0"></div><div class="abs" style="left:42.7px;top:677.0px;width:16px;height:12px;background:#f8e9ac;border:1px solid #e6d080;border-radius:1px"></div>
<span class="t " style="left:65.0px;top:674.0px;">Loads</span>
<div class="chev" style="left:44.6px;top:697.0px;transform:rotate(-45deg)"></div>
<div class="abs" style="left:62.4px;top:693.0px;width:7px;height:3px;background:#ecd684;border-radius:1px 1px 0 0"></div><div class="abs" style="left:62.4px;top:695.0px;width:16px;height:12px;background:#f8e9ac;border:1px solid #e6d080;border-radius:1px"></div>
<span class="t " style="left:84.5px;top:692.0px;">LC1 - Self-Weight Soil</span>
<div class="chev" style="left:44.6px;top:715.0px;transform:rotate(-45deg)"></div>
<div class="abs" style="left:62.4px;top:711.0px;width:7px;height:3px;background:#ecd684;border-radius:1px 1px 0 0"></div><div class="abs" style="left:62.4px;top:713.0px;width:16px;height:12px;background:#f8e9ac;border:1px solid #e6d080;border-radius:1px"></div>
<span class="t " style="left:84.5px;top:710.0px;">LC2 - Self-weight</span>
<div class="chev" style="left:44.6px;top:733.0px;transform:rotate(-45deg)"></div>
<div class="abs" style="left:62.4px;top:729.0px;width:7px;height:3px;background:#ecd684;border-radius:1px 1px 0 0"></div><div class="abs" style="left:62.4px;top:731.0px;width:16px;height:12px;background:#f8e9ac;border:1px solid #e6d080;border-radius:1px"></div>
<span class="t " style="left:84.5px;top:728.0px;">LC3 - Self-weight masonry walls</span>
<div class="chev" style="left:44.6px;top:751.0px;transform:rotate(-45deg)"></div>
<div class="abs" style="left:62.4px;top:747.0px;width:7px;height:3px;background:#ecd684;border-radius:1px 1px 0 0"></div><div class="abs" style="left:62.4px;top:749.0px;width:16px;height:12px;background:#f8e9ac;border:1px solid #e6d080;border-radius:1px"></div>
<span class="t " style="left:84.5px;top:746.0px;">LC4 - Rent</span>
<div class="chev" style="left:44.6px;top:769.0px;transform:rotate(-45deg)"></div>
<div class="abs" style="left:62.4px;top:765.0px;width:7px;height:3px;background:#ecd684;border-radius:1px 1px 0 0"></div><div class="abs" style="left:62.4px;top:767.0px;width:16px;height:12px;background:#f8e9ac;border:1px solid #e6d080;border-radius:1px"></div>
<span class="t " style="left:84.5px;top:764.0px;">LC5 - Centre</span>
<div class="chev" style="left:44.6px;top:787.0px;transform:rotate(-45deg)"></div>
<div class="abs" style="left:62.4px;top:783.0px;width:7px;height:3px;background:#ecd684;border-radius:1px 1px 0 0"></div><div class="abs" style="left:62.4px;top:785.0px;width:16px;height:12px;background:#f8e9ac;border:1px solid #e6d080;border-radius:1px"></div>
<span class="t " style="left:84.5px;top:782.0px;">LC6 - Full</span>
<div class="chev" style="left:44.6px;top:805.0px;transform:rotate(-45deg)"></div>
<div class="abs" style="left:62.4px;top:801.0px;width:7px;height:3px;background:#ecd684;border-radius:1px 1px 0 0"></div><div class="abs" style="left:62.4px;top:803.0px;width:16px;height:12px;background:#f8e9ac;border:1px solid #e6d080;border-radius:1px"></div>
<span class="t " style="left:84.5px;top:800.0px;">LC7 - Front</span>
<div class="chev" style="left:44.6px;top:823.0px;transform:rotate(-45deg)"></div>
<div class="abs" style="left:62.4px;top:819.0px;width:7px;height:3px;background:#ecd684;border-radius:1px 1px 0 0"></div><div class="abs" style="left:62.4px;top:821.0px;width:16px;height:12px;background:#f8e9ac;border:1px solid #e6d080;border-radius:1px"></div>
<span class="t " style="left:84.5px;top:818.0px;">LC8 - T= +10C</span>
<div class="chev" style="left:44.6px;top:841.1px;transform:rotate(-45deg)"></div>
<div class="abs" style="left:62.4px;top:837.1px;width:7px;height:3px;background:#ecd684;border-radius:1px 1px 0 0"></div><div class="abs" style="left:62.4px;top:839.1px;width:16px;height:12px;background:#f8e9ac;border:1px solid #e6d080;border-radius:1px"></div>
<span class="t " style="left:84.5px;top:836.1px;">LC9 - Solar panels</span>
<div class="chev" style="left:44.6px;top:859.1px;transform:rotate(-45deg)"></div>
<div class="abs" style="left:62.4px;top:855.1px;width:7px;height:3px;background:#ecd684;border-radius:1px 1px 0 0"></div><div class="abs" style="left:62.4px;top:857.1px;width:16px;height:12px;background:#f8e9ac;border:1px solid #e6d080;border-radius:1px"></div>
<span class="t " style="left:84.5px;top:854.1px;">LC10 - Snow</span>
<div class="abs" style="left:45.7px;top:873.1px;width:1.5px;height:13.0px;background:#3c3c3c;"></div>
<div class="abs" style="left:45.7px;top:885.1px;width:12.0px;height:1.5px;background:#7c9cd4;"></div>
<span class="t " style="left:65.0px;top:872.1px;">Calculation Diagrams</span>
<div class="chev" style="left:24.8px;top:895.1px;transform:rotate(-45deg)"></div>
<div class="abs" style="left:42.7px;top:891.1px;width:7px;height:3px;background:#ecd684;border-radius:1px 1px 0 0"></div><div class="abs" style="left:42.7px;top:893.1px;width:16px;height:12px;background:#f8e9ac;border:1px solid #e6d080;border-radius:1px"></div>
<span class="t " style="left:65.0px;top:890.1px;">Result Objects</span>
<div class="chev" style="left:24.8px;top:913.1px;transform:rotate(-45deg)"></div>
<div class="abs" style="left:42.7px;top:909.1px;width:7px;height:3px;background:#ecd684;border-radius:1px 1px 0 0"></div><div class="abs" style="left:42.7px;top:911.1px;width:16px;height:12px;background:#f8e9ac;border:1px solid #e6d080;border-radius:1px"></div>
<span class="t " style="left:65.0px;top:908.1px;">Results</span>
<div class="chev" style="left:24.8px;top:931.1px;transform:rotate(-45deg)"></div>
<div class="abs" style="left:42.7px;top:927.1px;width:7px;height:3px;background:#ecd684;border-radius:1px 1px 0 0"></div><div class="abs" style="left:42.7px;top:929.1px;width:16px;height:12px;background:#f8e9ac;border:1px solid #e6d080;border-radius:1px"></div>
<span class="t " style="left:65.0px;top:926.1px;">Guide Objects</span>
<div class="chev" style="left:24.8px;top:949.1px;transform:rotate(-45deg)"></div>
<div class="abs" style="left:42.7px;top:945.1px;width:7px;height:3px;background:#ecd684;border-radius:1px 1px 0 0"></div><div class="abs" style="left:42.7px;top:947.1px;width:16px;height:12px;background:#f8e9ac;border:1px solid #e6d080;border-radius:1px"></div>
<span class="t " style="left:65.0px;top:944.1px;">Concrete Design</span>
<div class="abs" style="left:42.7px;top:963.1px;width:7px;height:3px;background:#ecd684;border-radius:1px 1px 0 0"></div><div class="abs" style="left:42.7px;top:965.1px;width:16px;height:12px;background:#f8e9ac;border:1px solid #e6d080;border-radius:1px"></div>
<span class="t " style="left:65.0px;top:962.1px;">Printout Reports</span>
</div>
<div class="abs" style="left:0.0px;top:1359.0px;width:296.0px;height:14.0px;background:#f0f0f0;"></div>
<div class="abs" style="left:17.0px;top:1364.5px;width:257.0px;height:3.5px;background:#8c8c8c;border-radius:2px"></div>
<div class="abs" style="left:0.0px;top:1373.0px;width:296.0px;height:24.0px;background:#f2f2f2;"></div>
<div class="abs" style="left:3.0px;top:1373.0px;width:30.0px;height:24.0px;background:#ffffff;border-right:1px solid #ccc"></div>
<div class="ic" style="left:10.5px;top:1378.0px;width:14px;height:14px;background:linear-gradient(135deg,#e4b43c 0 50%,#3c74c4 50% 100%);border-radius:3px"></div>
<div class="abs" style="left:62.0px;top:1375.0px;width:1.0px;height:20.0px;background:#d0d0d0;"></div>
<div class="abs" style="left:94.0px;top:1375.0px;width:1.0px;height:20.0px;background:#d0d0d0;"></div>
<div class="ic" style="left:41.7px;top:1379.0px;width:12px;height:12px;background:radial-gradient(#2c3c7c 0 45%,#5c7cc4 46% 100%);border-radius:8px"></div>
<div class="abs" style="left:72.0px;top:1381.0px;width:11.0px;height:8.0px;background:#3c3c3c;border-radius:1px"></div>
<div class="abs" style="left:82.0px;top:1383.0px;width:4.0px;height:4.0px;background:#3c3c3c;"></div>
<div class="abs" style="left:301.0px;top:1219.0px;width:2259.0px;height:178.0px;background:#f3f3f3;"></div>
<div class="abs" style="left:301.0px;top:1222.5px;width:2259.0px;height:19.5px;background:#d3e4f5;"></div>
<span class="t b" style="left:306.0px;top:1224.5px;">Materials</span>
<div class="abs" style="left:2527.0px;top:1228.0px;width:7.0px;height:8.0px;background:#444;border-radius:1px"></div>
<svg class="abs" style="left:2544px;top:1228px" width="9" height="9"><path d="M1 1L8 8M8 1L1 8" stroke="#333" stroke-width="1.7"/></svg>
<span class="t " style="left:306.0px;top:1243.5px;">Go To</span>
<span class="t " style="left:346.0px;top:1243.5px;">Edit</span>
<span class="t " style="left:372.0px;top:1243.5px;">Selection</span>
<span class="t " style="left:427.0px;top:1243.5px;">View</span>
<span class="t " style="left:458.0px;top:1243.5px;">Settings</span>
<div class="abs" style="left:305.0px;top:1264.0px;width:198.0px;height:20.0px;background:#e6eaf6;"></div>
<div class="abs" style="left:308.0px;top:1267.0px;width:14.0px;height:14.0px;background:#3c9c8c;border:1px solid #2c6c6c"></div>
<div class="abs" style="left:311.0px;top:1271.0px;width:8.0px;height:7.0px;background:#d8f0ec;"></div>
<span class="t " style="left:328.0px;top:1266.0px;">Structure</span>
<div class="chev" style="left:488.0px;top:1269.0px;transform:rotate(45deg)"></div>
<div class="abs" style="left:508.0px;top:1266.0px;width:14.0px;height:16.0px;background:#d4d4d8;"></div>
<div class="dd" style="left:511px;top:1270.0px;border-top:4px solid transparent;border-bottom:4px solid transparent;border-right:5px solid #333;border-left:none"></div>
<div class="dd" style="left:529px;top:1270.0px;border-top:4px solid transparent;border-bottom:4px solid transparent;border-left:5px solid #333;border-right:none"></div>
<div class="abs" style="left:544.0px;top:1264.0px;width:272.0px;height:20.0px;background:#e6eaf6;"></div>
<div class="ic" style="left:549.0px;top:1267.0px;width:14px;height:14px;background:linear-gradient(135deg,transparent 0 43%,#d4342c 43% 57%,transparent 57% 100%)"></div>
<span class="t " style="left:572.0px;top:1266.0px;">Basic Objects</span>
<div class="chev" style="left:802.0px;top:1269.0px;transform:rotate(45deg)"></div>
<div class="abs" style="left:821.0px;top:1266.0px;width:14.0px;height:16.0px;background:#d4d4d8;"></div>
<div class="dd" style="left:824px;top:1270.0px;border-top:4px solid transparent;border-bottom:4px solid transparent;border-right:5px solid #333;border-left:none"></div>
<div class="dd" style="left:842px;top:1270.0px;border-top:4px solid transparent;border-bottom:4px solid transparent;border-left:5px solid #333;border-right:none"></div>
<div class="hl" style="left:855.0px;top:1262.5px;width:48.5px;height:23px"></div>
<div class="ic" style="left:859.5px;top:1266.5px;width:15px;height:15px;background:linear-gradient(135deg,#3c74c4 0 50%,#6c9ce4 50% 100%);border-radius:3px"></div>
<div class="ic" style="left:884.0px;top:1266.5px;width:15px;height:15px;background:linear-gradient(135deg,#3c74c4 0 50%,#a4c4ec 50% 100%);border-radius:3px"></div>
<div class="sep" style="left:910.0px;top:1264.0px"></div>
<div class="ic" style="left:920.9px;top:1266.5px;width:15px;height:15px;background:linear-gradient(#cacaca 0 35%,#b8b8b8 35% 100%);border-radius:2px"></div>
<div class="ic" style="left:943.5px;top:1266.5px;width:15px;height:15px;background:linear-gradient(#dadada 0 35%,#d0d0d0 35% 100%);border-radius:2px"></div>
<div class="ic" style="left:967.0px;top:1267.5px;width:13px;height:13px;border:2px solid #c6c6c6;background:#d6d6d6"></div>
<div class="ic" style="left:988.5px;top:1267.5px;width:13px;height:13px;border:2px solid #c6c6c6;background:#d6d6d6"></div>
<div class="ic" style="left:1012.1px;top:1267.5px;width:13px;height:13px;border:2px solid #c6c6c6;background:#d2d2d2"></div>
<div class="sep" style="left:1033.0px;top:1264.0px"></div>
<div class="ic" style="left:1042.3px;top:1267.5px;width:13px;height:13px;border:2px solid #5c5c5c;background:#8c8c8c"></div>
<div class="sep" style="left:1064.0px;top:1264.0px"></div>
<div class="ic" style="left:1073.0px;top:1266.5px;width:15px;height:15px;background:linear-gradient(transparent 0 20%,#7c7c84 20% 38%,transparent 38% 60%,#7c7c84 60% 78%,transparent 78%)"></div>
<div class="ic" style="left:1097.8px;top:1266.5px;width:15px;height:15px;background:linear-gradient(transparent 0 20%,#b4b4b4 20% 38%,transparent 38% 60%,#b4b4b4 60% 78%,transparent 78%)"></div>
<div class="ic" style="left:1120.4px;top:1266.5px;width:15px;height:15px;background:linear-gradient(transparent 0 20%,#c4c4c4 20% 38%,transparent 38% 60%,#c4c4c4 60% 78%,transparent 78%)"></div>
<div class="ic" style="left:1144.5px;top:1266.5px;width:15px;height:15px;background:linear-gradient(transparent 0 20%,#c8c8c8 20% 38%,transparent 38% 60%,#c8c8c8 60% 78%,transparent 78%)"></div>
<div class="sep" style="left:1168.0px;top:1264.0px"></div>
<div class="ic" style="left:1177.9px;top:1267.5px;width:13px;height:13px;border:2px solid #5c5c84;background:#ececf4"></div>
<div class="sep" style="left:1200.0px;top:1264.0px"></div>
<div class="ic" style="left:1208.5px;top:1266.5px;width:15px;height:15px;background:linear-gradient(135deg,#3c4c8c 0 50%,#6c7cac 50% 100%);border-radius:3px"></div>
<div class="ic" style="left:1234.9px;top:1266.5px;width:15px;height:15px;background:linear-gradient(135deg,transparent 0 43%,#7c7c84 43% 57%,transparent 57% 100%)"></div>
<div class="ic" style="left:1257.5px;top:1266.5px;width:15px;height:15px;background:linear-gradient(135deg,transparent 0 43%,#6c6c74 43% 57%,transparent 57% 100%)"></div>
<div class="ic" style="left:1280.0px;top:1266.5px;width:15px;height:15px;background:linear-gradient(135deg,transparent 0 43%,#4c5c8c 43% 57%,transparent 57% 100%)"></div>
<div class="sep" style="left:1302.0px;top:1264.0px"></div>
<div class="ic" style="left:1310.2px;top:1266.5px;width:15px;height:15px;background:linear-gradient(#7cc47c 0 35%,#3c9c4c 35% 100%);border-radius:2px"></div>
<div class="dd" style="left:1333.5px;top:1272.0px;border-top-color:#333"></div>
<div class="ic" style="left:1347.8px;top:1266.5px;width:15px;height:15px;background:linear-gradient(#8ccc8c 0 35%,#3c9c4c 35% 100%);border-radius:2px"></div>
<div class="ic" style="left:1371.9px;top:1266.5px;width:15px;height:15px;background:linear-gradient(#5cac6c 0 35%,#3c9c4c 35% 100%);border-radius:2px"></div>
<div class="sep" style="left:1393.5px;top:1264.0px"></div>
<div class="ic" style="left:1400.5px;top:1266.5px;width:15px;height:15px;background:linear-gradient(#d4443c 0 35%,#7c6c5c 35% 100%);border-radius:2px"></div>
<div class="ic" style="left:1426.9px;top:1266.5px;width:15px;height:15px;background:linear-gradient(#4cac4c 0 35%,#3c74c4 35% 100%);border-radius:2px"></div>
<div class="sep" style="left:1450.0px;top:1264.0px"></div>
<div class="ic" style="left:1460.8px;top:1266.5px;width:15px;height:15px;background:radial-gradient(#3c3c3c 0 45%,#6c6c6c 46% 100%);border-radius:8px"></div>
<div class="abs" style="left:302.0px;top:1287.0px;width:2239.0px;height:94.0px;background:#ffffff;"></div>
<div class="abs" style="left:302.0px;top:1287.0px;width:2239.0px;height:11.0px;background:#dedede;"></div>
<div class="abs" style="left:302.0px;top:1298.0px;width:2239.0px;height:32.5px;background:#ececec;border-bottom:1px solid #cfcfcf"></div>
<div class="th" style="left:302px;top:1299.5px;width:59px">Material</div>
<div class="th" style="left:302px;top:1314.5px;width:59px">No.</div>
<div class="th" style="left:361px;top:1314.5px;width:251px">Material Name</div>
<div class="abs" style="left:361.0px;top:1298.0px;width:1.0px;height:83.0px;background:#d8d8d8;"></div>
<div class="th" style="left:612px;top:1299.5px;width:138px">Material</div>
<div class="th" style="left:612px;top:1314.5px;width:138px">Type</div>
<div class="abs" style="left:612.0px;top:1298.0px;width:1.0px;height:83.0px;background:#d8d8d8;"></div>
<div class="th" style="left:750px;top:1314.5px;width:203px">Material Model</div>
<div class="abs" style="left:750.0px;top:1298.0px;width:1.0px;height:83.0px;background:#d8d8d8;"></div>
<div class="th" style="left:953px;top:1299.5px;width:101px">Modulus of Elast.</div>
<div class="th" style="left:953px;top:1314.5px;width:101px">E [N/mm²]</div>
<div class="abs" style="left:953.0px;top:1298.0px;width:1.0px;height:83.0px;background:#d8d8d8;"></div>
<div class="th" style="left:1054px;top:1299.5px;width:98px">Shear Modulus</div>
<div class="th" style="left:1054px;top:1314.5px;width:98px">G [N/mm²]</div>
<div class="abs" style="left:1054.0px;top:1298.0px;width:1.0px;height:83.0px;background:#d8d8d8;"></div>
<div class="th" style="left:1152px;top:1299.5px;width:102px">Poisson's Ratio</div>
<div class="th" style="left:1152px;top:1314.5px;width:102px">ν [-]</div>
<div class="abs" style="left:1152.0px;top:1298.0px;width:1.0px;height:83.0px;background:#d8d8d8;"></div>
<div class="th" style="left:1254px;top:1299.5px;width:98px">Specific Weight</div>
<div class="th" style="left:1254px;top:1314.5px;width:98px">γ [kN/m³]</div>
<div class="abs" style="left:1254.0px;top:1298.0px;width:1.0px;height:83.0px;background:#d8d8d8;"></div>
<div class="th" style="left:1352px;top:1299.5px;width:101px">Mass Density</div>
<div class="th" style="left:1352px;top:1314.5px;width:101px">ρ [kg/m³]</div>
<div class="abs" style="left:1352.0px;top:1298.0px;width:1.0px;height:83.0px;background:#d8d8d8;"></div>
<div class="th" style="left:1453px;top:1299.5px;width:98px">Coeff. of Th. Exp.</div>
<div class="th" style="left:1453px;top:1314.5px;width:98px">α [1/°C]</div>
<div class="abs" style="left:1453.0px;top:1298.0px;width:1.0px;height:83.0px;background:#d8d8d8;"></div>
<div class="th" style="left:1551px;top:1314.5px;width:87px">Options</div>
<div class="abs" style="left:1551.0px;top:1298.0px;width:1.0px;height:83.0px;background:#d8d8d8;"></div>
<div class="th" style="left:1638px;top:1314.5px;width:903px">Comment</div>
<div class="abs" style="left:1638.0px;top:1298.0px;width:1.0px;height:83.0px;background:#d8d8d8;"></div>
<div class="abs" style="left:302.0px;top:1330.5px;width:59.0px;height:16.6px;background:#ececec;border-bottom:1px solid #d8d8d8"></div>
<div class="abs" style="left:1054.0px;top:1330.5px;width:98.0px;height:16.6px;background:#f4f4ea;"></div>
<div class="abs" style="left:361.0px;top:1346.5px;width:2180.0px;height:1.0px;background:#e4e4e4;"></div>
<div class="td" style="left:302px;top:1330.8px;width:59px;text-align:center">7</div>
<div class="abs" style="left:365.0px;top:1333.3px;width:11.0px;height:11.0px;background:#a0580c;"></div>
<div class="td" style="left:382px;top:1330.8px">GEO1</div>
<div class="abs" style="left:617.0px;top:1333.3px;width:11.0px;height:11.0px;background:#1c9c94;"></div>
<div class="td" style="left:634px;top:1330.8px">Soil</div>
<div class="abs" style="left:755.0px;top:1333.3px;width:11.0px;height:11.0px;background:#b4f8f8;"></div>
<div class="td" style="left:772px;top:1330.8px">Isotropic | Linear Elastic</div>
<div class="td" style="left:953px;top:1330.8px;width:93px;text-align:right">12.0</div>
<div class="td" style="left:1054px;top:1330.8px;width:90px;text-align:right">4.6</div>
<div class="td" style="left:1152px;top:1330.8px;width:94px;text-align:right">0.300</div>
<div class="td" style="left:1254px;top:1330.8px;width:90px;text-align:right">18.00</div>
<div class="td" style="left:1352px;top:1330.8px;width:93px;text-align:right">1800.00</div>
<div class="td" style="left:1453px;top:1330.8px;width:90px;text-align:right">0.000000</div>
<div class="ic" style="left:1555.5px;top:1334.3px;width:9px;height:9px;background:linear-gradient(135deg,#5c9cdc 0 50%,#3c74c4 50% 100%);border-radius:3px"></div>
<div class="abs" style="left:302.0px;top:1347.1px;width:59.0px;height:16.6px;background:#ececec;border-bottom:1px solid #d8d8d8"></div>
<div class="abs" style="left:1054.0px;top:1347.1px;width:98.0px;height:16.6px;background:#f4f4ea;"></div>
<div class="abs" style="left:361.0px;top:1363.1px;width:2180.0px;height:1.0px;background:#e4e4e4;"></div>
<div class="td" style="left:302px;top:1347.4px;width:59px;text-align:center">8</div>
<div class="abs" style="left:365.0px;top:1349.9px;width:11.0px;height:11.0px;background:#004c04;"></div>
<div class="td" style="left:382px;top:1347.4px">GEO2</div>
<div class="abs" style="left:617.0px;top:1349.9px;width:11.0px;height:11.0px;background:#1c9c94;"></div>
<div class="td" style="left:634px;top:1347.4px">Soil</div>
<div class="abs" style="left:755.0px;top:1349.9px;width:11.0px;height:11.0px;background:#b4f8f8;"></div>
<div class="td" style="left:772px;top:1347.4px">Isotropic | Linear Elastic</div>
<div class="td" style="left:953px;top:1347.4px;width:93px;text-align:right">4.0</div>
<div class="td" style="left:1054px;top:1347.4px;width:90px;text-align:right">1.5</div>
<div class="td" style="left:1152px;top:1347.4px;width:94px;text-align:right">0.300</div>
<div class="td" style="left:1254px;top:1347.4px;width:90px;text-align:right">16.00</div>
<div class="td" style="left:1352px;top:1347.4px;width:93px;text-align:right">1600.00</div>
<div class="td" style="left:1453px;top:1347.4px;width:90px;text-align:right">0.000000</div>
<div class="ic" style="left:1555.5px;top:1350.9px;width:9px;height:9px;background:linear-gradient(135deg,#5c9cdc 0 50%,#3c74c4 50% 100%);border-radius:3px"></div>
<div class="abs" style="left:302.0px;top:1363.7px;width:59.0px;height:16.6px;background:#ececec;border-bottom:1px solid #d8d8d8"></div>
<div class="abs" style="left:1054.0px;top:1363.7px;width:98.0px;height:16.6px;background:#f4f4ea;"></div>
<div class="abs" style="left:361.0px;top:1379.7px;width:2180.0px;height:1.0px;background:#e4e4e4;"></div>
<div class="td" style="left:302px;top:1364.0px;width:59px;text-align:center">9</div>
<div class="abs" style="left:365.0px;top:1366.5px;width:11.0px;height:11.0px;background:#f8c8a0;"></div>
<div class="td" style="left:382px;top:1364.0px">GEO3</div>
<div class="abs" style="left:617.0px;top:1366.5px;width:11.0px;height:11.0px;background:#1c9c94;"></div>
<div class="td" style="left:634px;top:1364.0px">Soil</div>
<div class="abs" style="left:755.0px;top:1366.5px;width:11.0px;height:11.0px;background:#b4f8f8;"></div>
<div class="td" style="left:772px;top:1364.0px">Isotropic | Linear Elastic</div>
<div class="td" style="left:953px;top:1364.0px;width:93px;text-align:right">8.0</div>
<div class="td" style="left:1054px;top:1364.0px;width:90px;text-align:right">3.1</div>
<div class="td" style="left:1152px;top:1364.0px;width:94px;text-align:right">0.300</div>
<div class="td" style="left:1254px;top:1364.0px;width:90px;text-align:right">18.00</div>
<div class="td" style="left:1352px;top:1364.0px;width:93px;text-align:right">1800.00</div>
<div class="td" style="left:1453px;top:1364.0px;width:90px;text-align:right">0.000000</div>
<div class="ic" style="left:1555.5px;top:1367.5px;width:9px;height:9px;background:linear-gradient(135deg,#5c9cdc 0 50%,#3c74c4 50% 100%);border-radius:3px"></div>
<div class="abs" style="left:2541.0px;top:1287.0px;width:14.0px;height:94.0px;background:#f0f0f0;"></div>
<div class="abs" style="left:2545.5px;top:1310.0px;width:5.0px;height:22.0px;background:#8c8c8c;border-radius:2px"></div>
<div class="abs" style="left:2478px;top:1341px;width:46px;height:46px;border-radius:23px;background:#ffffff;overflow:hidden;box-shadow:0 0 2px rgba(0,0,0,.25)"><div class="abs" style="left:7px;top:4px;width:32px;height:30px;border-radius:15px;background:#7a4a2c"></div><div class="abs" style="left:13px;top:10px;width:20px;height:23px;border-radius:10px;background:#e2b193"></div><div class="abs" style="left:13px;top:18px;width:20px;height:4px;background:#3c3c44;opacity:.8"></div><div class="abs" style="left:6px;top:33px;width:34px;height:20px;border-radius:12px 12px 0 0;background:#2c6cb4"></div></div>
<div class="abs" style="left:301.0px;top:1380.5px;width:2259.0px;height:17.5px;background:#f3f3f3;"></div>
<div class="dd" style="left:305px;top:1386.0px;border-top:3px solid transparent;border-bottom:3px solid transparent;border-right:4px solid #999;border-left:none"></div>
<div class="dd" style="left:324px;top:1386.0px;border-top:3px solid transparent;border-bottom:3px solid transparent;border-right:4px solid #999;border-left:none"></div>
<span class="t " style="left:346.0px;top:1381.0px;font-size:10.4px">1 of 13</span>
<div class="dd" style="left:399px;top:1386.0px;border-top:3px solid transparent;border-bottom:3px solid transparent;border-left:4px solid #333;border-right:none"></div>
<div class="dd" style="left:413px;top:1386.0px;border-top:3px solid transparent;border-bottom:3px solid transparent;border-left:4px solid #333;border-right:none"></div>
<div class="abs" style="left:418.0px;top:1385.5px;width:1.3px;height:7.0px;background:#333;"></div>
<div class="tab" style="left:427.7px;top:1380.5px;width:52.7px;background:#ffffff;">Materials</div>
<div class="tab" style="left:480.4px;top:1380.5px;width:79.0px;background:#ececec;border-bottom:1px solid #c8c8c8;">Cross-Sections</div>
<div class="tab" style="left:559.4px;top:1380.5px;width:67.8px;background:#ececec;border-bottom:1px solid #c8c8c8;">Thicknesses</div>
<div class="tab" style="left:627.2px;top:1380.5px;width:50.4px;background:#ececec;border-bottom:1px solid #c8c8c8;">Nodes</div>
<div class="tab" style="left:677.6px;top:1380.5px;width:47.5px;background:#ececec;border-bottom:1px solid #c8c8c8;">Lines</div>
<div class="tab" style="left:725.1px;top:1380.5px;width:54.9px;background:#ececec;border-bottom:1px solid #c8c8c8;">Members</div>
<div class="tab" style="left:780.0px;top:1380.5px;width:50.5px;background:#ececec;border-bottom:1px solid #c8c8c8;">Surfaces</div>
<div class="tab" style="left:830.5px;top:1380.5px;width:56.5px;background:#ececec;border-bottom:1px solid #c8c8c8;">Openings</div>
<div class="tab" style="left:887.0px;top:1380.5px;width:47.4px;background:#ececec;border-bottom:1px solid #c8c8c8;">Solids</div>
<div class="tab" style="left:934.4px;top:1380.5px;width:54.2px;background:#ececec;border-bottom:1px solid #c8c8c8;">Line Sets</div>
<div class="tab" style="left:988.6px;top:1380.5px;width:71.6px;background:#ececec;border-bottom:1px solid #c8c8c8;">Member Sets</div>
<div class="tab" style="left:1060.2px;top:1380.5px;width:65.5px;background:#ececec;border-bottom:1px solid #c8c8c8;">Surface Sets</div>
<div class="tab" style="left:1125.7px;top:1380.5px;width:60.2px;background:#ececec;border-bottom:1px solid #c8c8c8;">Solid Sets</div>
<div class="abs" style="left:0.0px;top:1397.0px;width:2560.0px;height:26.5px;background:#f1f2f8;"></div>
<div class="abs" style="left:0.0px;top:1423.5px;width:2560.0px;height:16.5px;background:#e6e9f5;"></div>
<div class="ic" style="left:5.0px;top:1403.5px;width:14px;height:14px;background:linear-gradient(135deg,transparent 0 43%,#3c64b4 43% 57%,transparent 57% 100%)"></div>
<div class="abs" style="left:4.0px;top:1412.5px;width:5.0px;height:5.0px;background:#2cac3c;"></div>
<div class="abs" style="left:24.0px;top:1400.5px;width:204.0px;height:20.0px;background:#e6eaf6;"></div>
<div class="abs" style="left:27.0px;top:1403.5px;width:14.0px;height:14.0px;background:#b6f6f6;"></div>
<span class="t " style="left:49.0px;top:1402.5px;">1 - Global XYZ</span>
<div class="chev" style="left:214.0px;top:1405.5px;transform:rotate(45deg)"></div>
<div class="sep" style="left:231.0px;top:1400.5px"></div>
<div class="ic" style="left:238.0px;top:1402.5px;width:16px;height:16px;background:linear-gradient(135deg,#3c5c9c 0 50%,#e4c43c 50% 100%);border-radius:3px"></div>
<div class="ic" style="left:261.5px;top:1402.5px;width:16px;height:16px;background:linear-gradient(135deg,#3c5c9c 0 50%,#6c8cc4 50% 100%);border-radius:3px"></div>
<div class="ic" style="left:285.0px;top:1402.5px;width:16px;height:16px;background:linear-gradient(135deg,#3c5c9c 0 50%,#5c7cb4 50% 100%);border-radius:3px"></div>
<div class="ic" style="left:308.5px;top:1402.5px;width:16px;height:16px;background:linear-gradient(135deg,#3c5c9c 0 50%,#4c6cac 50% 100%);border-radius:3px"></div>
<div class="ic" style="left:332.0px;top:1402.5px;width:16px;height:16px;background:linear-gradient(#8cacdc 0 35%,#3c5c9c 35% 100%);border-radius:2px"></div>
<div class="sep" style="left:359.0px;top:1400.5px"></div>
<div class="ic" style="left:367.5px;top:1402.5px;width:16px;height:16px;background:linear-gradient(#e4c43c 0 35%,#5c5c5c 35% 100%);border-radius:2px"></div>
<div class="ic" style="left:391.0px;top:1402.5px;width:16px;height:16px;background:linear-gradient(#e4a43c 0 35%,#5c5c5c 35% 100%);border-radius:2px"></div>
<div class="ic" style="left:414.5px;top:1402.5px;width:9px;height:9px;background:#4c4c4c"></div><div class="ic" style="left:420.5px;top:1408.5px;width:10px;height:10px;background:#e4c43c"></div>
<div class="dd" style="left:430.0px;top:1408.5px;border-top-color:#333"></div>
<div class="ic" style="left:443.0px;top:1402.5px;width:16px;height:16px;background:linear-gradient(135deg,#4c4c4c 0 50%,#e4c43c 50% 100%);border-radius:3px"></div>
<div class="ic" style="left:466.5px;top:1402.5px;width:16px;height:16px;background:linear-gradient(135deg,#4c4c5c 0 50%,#8c9cbc 50% 100%);border-radius:3px"></div>
<div class="ic" style="left:491.0px;top:1403.5px;width:14px;height:14px;border:2px solid #4c5c7c;background:#ececec"></div>
<div class="sep" style="left:517.0px;top:1400.5px"></div>
<div class="ic" style="left:525.5px;top:1402.5px;width:16px;height:16px;background:linear-gradient(135deg,transparent 0 43%,#d4342c 43% 57%,transparent 57% 100%)"></div>
<div class="dd" style="left:541.0px;top:1408.5px;border-top-color:#333"></div>
<div class="ic" style="left:554.0px;top:1402.5px;width:9px;height:9px;background:#3c4c8c"></div><div class="ic" style="left:560.0px;top:1408.5px;width:10px;height:10px;background:#6c8cc4"></div>
<div class="dd" style="left:569.5px;top:1408.5px;border-top-color:#333"></div>
<div class="sep" style="left:587.0px;top:1400.5px"></div>
<div class="ic" style="left:595.5px;top:1402.5px;width:16px;height:16px;background:linear-gradient(transparent 0 20%,#c44c4c 20% 38%,transparent 38% 60%,#c44c4c 60% 78%,transparent 78%)"></div>
<div class="ic" style="left:619.0px;top:1402.5px;width:16px;height:16px;background:radial-gradient(#3c54a4 0 45%,#3c54a4 46% 100%);border-radius:8px"></div>
<div class="ic" style="left:642.5px;top:1402.5px;width:16px;height:16px;background:linear-gradient(135deg,transparent 0 43%,#d4342c 43% 57%,transparent 57% 100%)"></div>
<div class="dd" style="left:654.0px;top:1408.5px;border-top-color:#333"></div>
<div class="ic" style="left:667.0px;top:1402.5px;width:16px;height:16px;background:linear-gradient(135deg,transparent 0 43%,#d4342c 43% 57%,transparent 57% 100%)"></div>
<div class="ic" style="left:684.5px;top:1402.5px;width:16px;height:16px;background:linear-gradient(135deg,transparent 0 43%,#d4342c 43% 57%,transparent 57% 100%)"></div>
<div class="ic" style="left:702.0px;top:1402.5px;width:16px;height:16px;background:linear-gradient(135deg,transparent 0 43%,#5c5c9c 43% 57%,transparent 57% 100%)"></div>
<div class="ic" style="left:719.5px;top:1402.5px;width:16px;height:16px;background:linear-gradient(135deg,transparent 0 43%,#3c54c4 43% 57%,transparent 57% 100%)"></div>
<div class="ic" style="left:737.0px;top:1402.5px;width:16px;height:16px;background:linear-gradient(135deg,transparent 0 43%,#d4342c 43% 57%,transparent 57% 100%)"></div>
<div class="ic" style="left:754.5px;top:1402.5px;width:16px;height:16px;background:linear-gradient(135deg,transparent 0 43%,#d4342c 43% 57%,transparent 57% 100%)"></div>
<div class="ic" style="left:772.0px;top:1402.5px;width:16px;height:16px;background:radial-gradient(#9c9c9c 0 45%,#9c9c9c 46% 100%);border-radius:8px"></div>
<div class="ic" style="left:791.5px;top:1402.5px;width:16px;height:16px;background:linear-gradient(transparent 0 20%,#d4342c 20% 38%,transparent 38% 60%,#d4342c 60% 78%,transparent 78%)"></div>
<div class="ic" style="left:811.0px;top:1402.5px;width:16px;height:16px;background:linear-gradient(135deg,transparent 0 43%,#d4342c 43% 57%,transparent 57% 100%)"></div>
<div class="sep" style="left:836.0px;top:1400.5px"></div>
<div class="ic" style="left:845.5px;top:1403.5px;width:14px;height:14px;border:2px solid #4c4c4c;background:#d4342c"></div>
<div class="dd" style="left:860.0px;top:1408.5px;border-top-color:#333"></div>
<div class="ic" style="left:873.0px;top:1402.5px;width:16px;height:16px;background:linear-gradient(135deg,transparent 0 43%,#d4342c 43% 57%,transparent 57% 100%)"></div>
<div class="ic" style="left:890.5px;top:1402.5px;width:16px;height:16px;background:linear-gradient(135deg,transparent 0 43%,#3c54c4 43% 57%,transparent 57% 100%)"></div>
<div class="ic" style="left:908.0px;top:1402.5px;width:16px;height:16px;background:linear-gradient(135deg,transparent 0 43%,#d4342c 43% 57%,transparent 57% 100%)"></div>
<div class="ic" style="left:925.5px;top:1402.5px;width:16px;height:16px;background:linear-gradient(135deg,transparent 0 43%,#d4342c 43% 57%,transparent 57% 100%)"></div>
<div class="ic" style="left:943.0px;top:1402.5px;width:16px;height:16px;background:linear-gradient(transparent 0 20%,#d4342c 20% 38%,transparent 38% 60%,#d4342c 60% 78%,transparent 78%)"></div>
<div class="ic" style="left:1977.8px;top:1405.0px;width:11px;height:11px;background:linear-gradient(135deg,#5c6c84 0 50%,#eef0f6 50% 100%);border-radius:3px"></div>
<div class="ic" style="left:2008.1px;top:1406.0px;width:9px;height:9px;border:2px solid #4c6c9c;background:#eef0f6"></div>
<div class="ic" style="left:2031.5px;top:1406.0px;width:9px;height:9px;border:2px solid #5c6c9c;background:#eef0f6"></div>
<div class="ic" style="left:2056.1px;top:1405.0px;width:11px;height:11px;background:linear-gradient(135deg,#a0a85c 0 50%,#eef0f6 50% 100%);border-radius:3px"></div>
<div class="abs" style="left:2075.9px;top:1399.5px;width:21.5px;height:22.0px;background:#c2e0f8;"></div>
<div class="ic" style="left:2081.9px;top:1406.0px;width:9px;height:9px;border:2px solid #3c74c4;background:#e4f0fc"></div>
<div class="ic" style="left:2115.8px;top:1406.0px;width:9px;height:9px;border:2px solid #8c8c8c;background:#eef0f6"></div>
<div class="abs" style="left:2139.9px;top:1399.5px;width:21.5px;height:22.0px;background:#c2e0f8;"></div>
<div class="ic" style="left:2144.9px;top:1405.0px;width:11px;height:11px;background:linear-gradient(135deg,#8c5c8c 0 50%,#e4f0fc 50% 100%);border-radius:3px"></div>
<div class="abs" style="left:2161.0px;top:1399.5px;width:21.5px;height:22.0px;background:#c2e0f8;"></div>
<div class="ic" style="left:2167.0px;top:1406.0px;width:9px;height:9px;border:2px solid #3c54b4;background:#e4f0fc"></div>
<div class="ic" style="left:2188.8px;top:1406.0px;width:9px;height:9px;border:2px solid #6c6c6c;background:#eef0f6"></div>
<div class="ic" style="left:2210.4px;top:1405.0px;width:11px;height:11px;background:linear-gradient(135deg,#8c8c8c 0 50%,#eef0f6 50% 100%);border-radius:3px"></div>
<div class="abs" style="left:2228.0px;top:1399.5px;width:21.5px;height:22.0px;background:#c2e0f8;"></div>
<div class="ic" style="left:2234.0px;top:1406.0px;width:9px;height:9px;border:2px solid #3c5cac;background:#e4f0fc"></div>
<div class="abs" style="left:2249.1px;top:1399.5px;width:21.5px;height:22.0px;background:#c2e0f8;"></div>
<div class="ic" style="left:2255.1px;top:1406.0px;width:9px;height:9px;border:2px solid #3c5cac;background:#e4f0fc"></div>
<div class="ic" style="left:2276.7px;top:1405.0px;width:11px;height:11px;background:linear-gradient(135deg,#7c7c7c 0 50%,#eef0f6 50% 100%);border-radius:3px"></div>
<div class="abs" style="left:2294.3px;top:1399.5px;width:21.5px;height:22.0px;background:#c2e0f8;"></div>
<div class="ic" style="left:2300.3px;top:1406.0px;width:9px;height:9px;border:2px solid #5c7cc4;background:#e4f0fc"></div>
<div class="abs" style="left:2316.9px;top:1399.5px;width:21.5px;height:22.0px;background:#c2e0f8;"></div>
<div class="ic" style="left:2322.9px;top:1406.0px;width:9px;height:9px;border:2px solid #4c5c8c;background:#e4f0fc"></div>
<div class="ic" style="left:2343.0px;top:1405.0px;width:11px;height:11px;background:linear-gradient(135deg,#5c5c5c 0 50%,#eef0f6 50% 100%);border-radius:3px"></div>
<div class="ic" style="left:2365.8px;top:1406.0px;width:9px;height:9px;border:2px solid #7c7c7c;background:#eef0f6"></div>
<div class="ic" style="left:2386.9px;top:1406.0px;width:9px;height:9px;border:2px solid #7c7c7c;background:#eef0f6"></div>
<div class="ic" style="left:2408.5px;top:1405.0px;width:11px;height:11px;background:linear-gradient(135deg,#8c8c8c 0 50%,#eef0f6 50% 100%);border-radius:3px"></div>
<div class="ic" style="left:2432.0px;top:1406.0px;width:9px;height:9px;border:2px solid #c4c4c4;background:#eef0f6"></div>
<div class="abs" style="left:2448.6px;top:1399.5px;width:21.5px;height:22.0px;background:#c2e0f8;"></div>
<div class="ic" style="left:2454.6px;top:1406.0px;width:9px;height:9px;border:2px solid #3c74c4;background:#e4f0fc"></div>
<div class="abs" style="left:2469.7px;top:1399.5px;width:21.5px;height:22.0px;background:#c2e0f8;"></div>
<div class="ic" style="left:2474.7px;top:1405.0px;width:11px;height:11px;background:linear-gradient(135deg,#3c74c4 0 50%,#e4f0fc 50% 100%);border-radius:3px"></div>
<div class="ic" style="left:2498.3px;top:1406.0px;width:9px;height:9px;border:2px solid #5c5c5c;background:#eef0f6"></div>
<div class="abs" style="left:2514.9px;top:1399.5px;width:21.5px;height:22.0px;background:#c2e0f8;"></div>
<div class="ic" style="left:2520.9px;top:1406.0px;width:9px;height:9px;border:2px solid #2c4c9c;background:#e4f0fc"></div>
<div class="abs" style="left:2535.2px;top:1399.5px;width:21.5px;height:22.0px;background:#c2e0f8;"></div>
<div class="ic" style="left:2540.2px;top:1405.0px;width:11px;height:11px;background:linear-gradient(135deg,#3c5cac 0 50%,#e4f0fc 50% 100%);border-radius:3px"></div>
<span class="t " style="left:2107.0px;top:1423.5px;font-size:10.4px">CS: Global XYZ</span>
<span class="t " style="left:2295.0px;top:1423.5px;font-size:10.4px">Plane: XY</span>
<div class="abs" style="left:1950.0px;top:1425.0px;width:1.0px;height:13.0px;background:#d0d4e4;"></div>
<div class="abs" style="left:2260.0px;top:1425.0px;width:1.0px;height:13.0px;background:#d0d4e4;"></div>
<div class="abs" style="left:2410.0px;top:1425.0px;width:1.0px;height:13.0px;background:#d0d4e4;"></div>
</div></div></body></html>
